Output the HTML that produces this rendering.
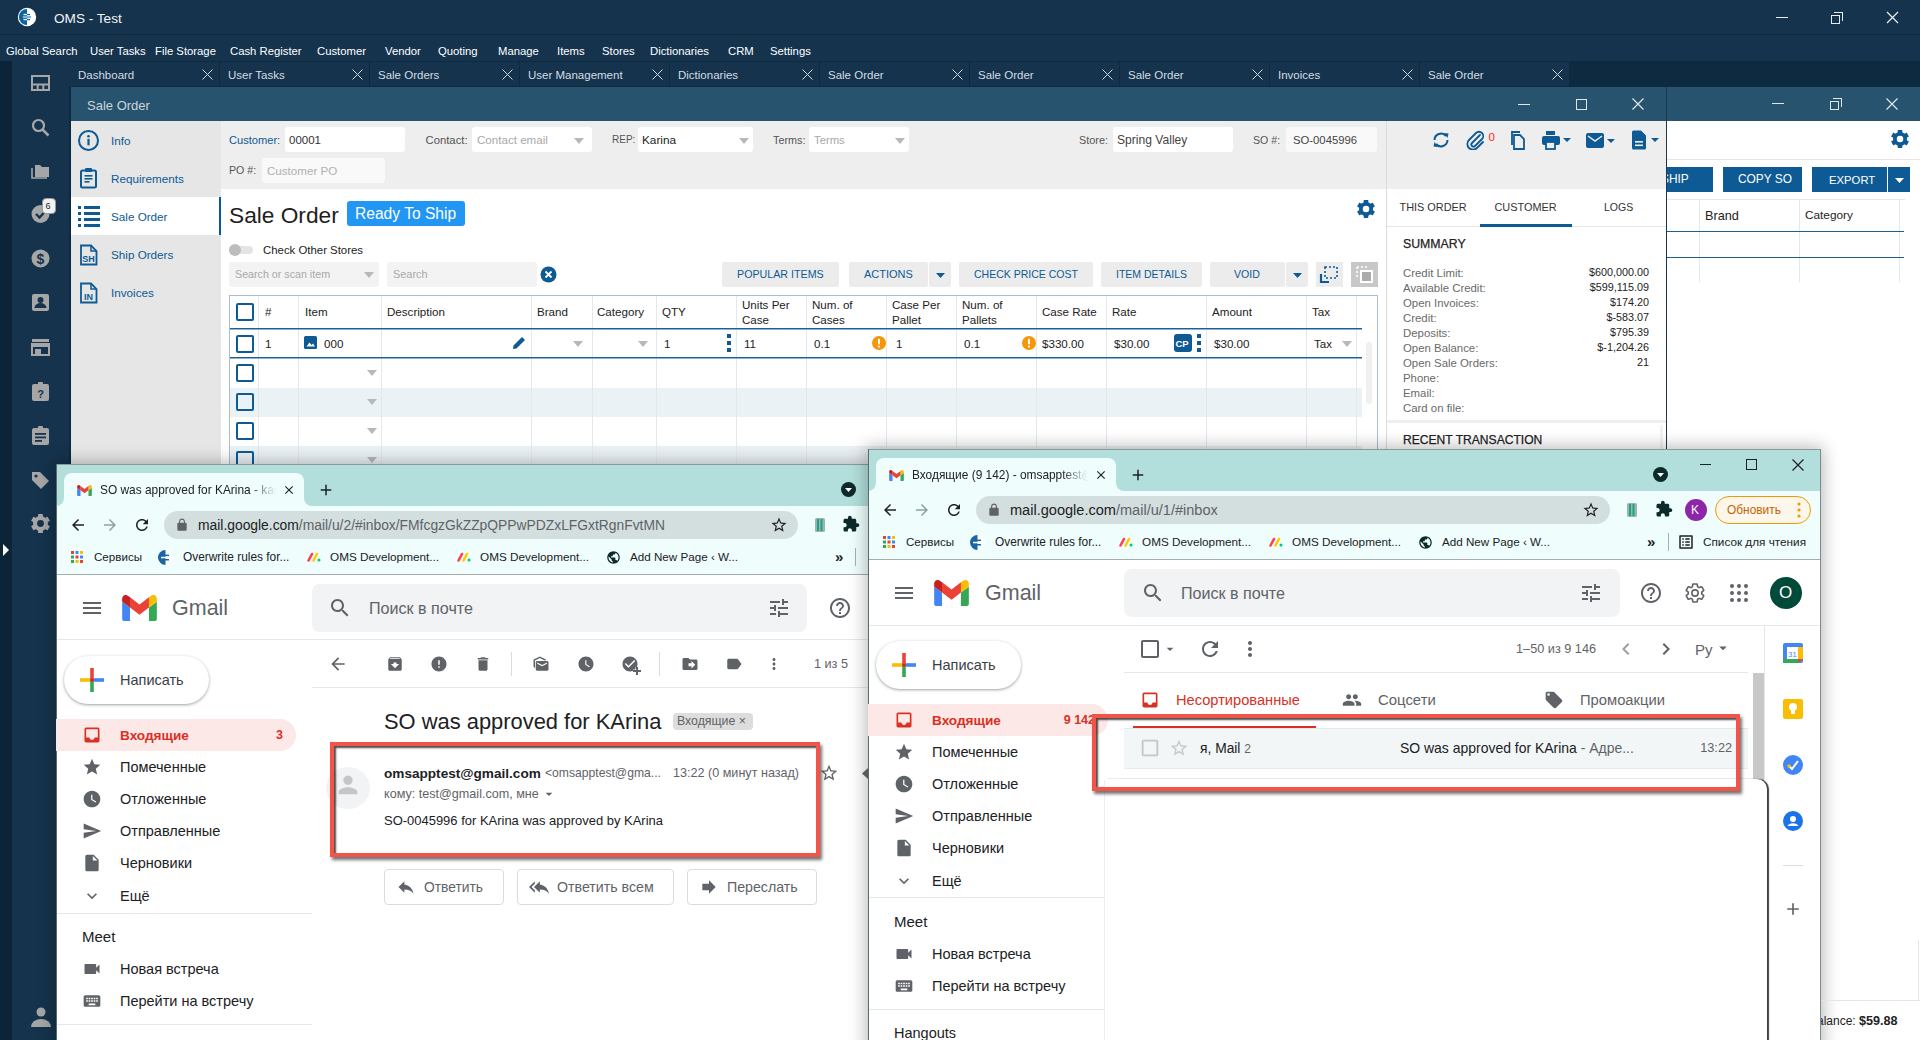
<!DOCTYPE html><html><head><meta charset="utf-8"><style>
*{margin:0;padding:0;box-sizing:border-box}
html,body{width:1920px;height:1040px;overflow:hidden;background:#fff;font-family:"Liberation Sans",sans-serif}
body>div,body>svg{position:absolute}
.t{white-space:nowrap}
</style></head><body>
<div style="left:0px;top:0px;width:1920px;height:34px;background:#15334d;"></div>
<div style="left:0px;top:34px;width:1920px;height:1px;background:#0f2a40;"></div>
<div style="left:0px;top:35px;width:1920px;height:26px;background:#15334d;"></div>
<svg style="left:17px;top:7px;" width="20" height="20" viewBox="0 0 20 20"><circle cx="10" cy="10" r="9.2" fill="#fff"/><path d="M10 1.9 A8.1 8.1 0 0 0 10 18.1 Z" fill="#0a64a4"/><rect x="6.5" y="6.9" width="3.5" height="1.3" fill="#fff"/><rect x="10" y="6.9" width="3" height="1.3" fill="#0a64a4"/><rect x="6" y="9.4" width="4" height="1.3" fill="#cfe0ec"/><rect x="10" y="9.4" width="4" height="1.3" fill="#3d86bb"/><rect x="6.5" y="11.9" width="3.5" height="1.3" fill="#fff"/><rect x="10" y="11.9" width="3" height="1.3" fill="#0a64a4"/></svg>
<div class="t" style="left:54px;top:9.0px;font-size:13.6px;line-height:19px;color:#f2f5f7;font-weight:400;">OMS - Test</div>
<div style="left:1776px;top:17px;width:12px;height:1px;background:#e8ecef;"></div>
<div style="left:1831px;top:15px;width:9px;height:9px;border:1px solid #e8ecef"></div>
<div style="left:1834px;top:12px;width:9px;height:9px;border-top:1px solid #e8ecef;border-right:1px solid #e8ecef"></div>
<svg style="left:1886px;top:11px;" width="13" height="13" viewBox="0 0 13 13"><path d="M1 1L12 12M12 1L1 12" stroke="#e8ecef" stroke-width="1.3"/></svg>
<div class="t" style="left:6px;top:42.5px;font-size:11.3px;line-height:16px;color:#ffffff;font-weight:400;">Global Search</div>
<div class="t" style="left:90px;top:42.5px;font-size:11.3px;line-height:16px;color:#ffffff;font-weight:400;">User Tasks</div>
<div class="t" style="left:155px;top:42.5px;font-size:11.3px;line-height:16px;color:#ffffff;font-weight:400;">File Storage</div>
<div class="t" style="left:230px;top:42.5px;font-size:11.3px;line-height:16px;color:#ffffff;font-weight:400;">Cash Register</div>
<div class="t" style="left:317px;top:42.5px;font-size:11.3px;line-height:16px;color:#ffffff;font-weight:400;">Customer</div>
<div class="t" style="left:385px;top:42.5px;font-size:11.3px;line-height:16px;color:#ffffff;font-weight:400;">Vendor</div>
<div class="t" style="left:438px;top:42.5px;font-size:11.3px;line-height:16px;color:#ffffff;font-weight:400;">Quoting</div>
<div class="t" style="left:498px;top:42.5px;font-size:11.3px;line-height:16px;color:#ffffff;font-weight:400;">Manage</div>
<div class="t" style="left:557px;top:42.5px;font-size:11.3px;line-height:16px;color:#ffffff;font-weight:400;">Items</div>
<div class="t" style="left:602px;top:42.5px;font-size:11.3px;line-height:16px;color:#ffffff;font-weight:400;">Stores</div>
<div class="t" style="left:650px;top:42.5px;font-size:11.3px;line-height:16px;color:#ffffff;font-weight:400;">Dictionaries</div>
<div class="t" style="left:728px;top:42.5px;font-size:11.3px;line-height:16px;color:#ffffff;font-weight:400;">CRM</div>
<div class="t" style="left:770px;top:42.5px;font-size:11.3px;line-height:16px;color:#ffffff;font-weight:400;">Settings</div>
<div style="left:0px;top:61px;width:12px;height:979px;background:#0c2437;"></div>
<div style="left:12px;top:61px;width:58px;height:979px;background:#15334d;"></div>
<div style="left:70px;top:61px;width:1850px;height:26px;background:#0e2a40;"></div>
<div style="left:70px;top:62px;width:149px;height:24px;background:#15334d;"></div>
<div class="t" style="left:78px;top:67.3px;font-size:11.5px;line-height:16px;color:#d3dce3;font-weight:400;">Dashboard</div>
<svg style="left:202px;top:69px;" width="11" height="11" viewBox="0 0 11 11"><path d="M0.5 0.5L10.5 10.5M10.5 0.5L0.5 10.5" stroke="#cfd8df" stroke-width="1"/></svg>
<div style="left:220px;top:62px;width:149px;height:24px;background:#15334d;"></div>
<div class="t" style="left:228px;top:67.3px;font-size:11.5px;line-height:16px;color:#d3dce3;font-weight:400;">User Tasks</div>
<svg style="left:352px;top:69px;" width="11" height="11" viewBox="0 0 11 11"><path d="M0.5 0.5L10.5 10.5M10.5 0.5L0.5 10.5" stroke="#cfd8df" stroke-width="1"/></svg>
<div style="left:370px;top:62px;width:149px;height:24px;background:#15334d;"></div>
<div class="t" style="left:378px;top:67.3px;font-size:11.5px;line-height:16px;color:#d3dce3;font-weight:400;">Sale Orders</div>
<svg style="left:502px;top:69px;" width="11" height="11" viewBox="0 0 11 11"><path d="M0.5 0.5L10.5 10.5M10.5 0.5L0.5 10.5" stroke="#cfd8df" stroke-width="1"/></svg>
<div style="left:520px;top:62px;width:149px;height:24px;background:#15334d;"></div>
<div class="t" style="left:528px;top:67.3px;font-size:11.5px;line-height:16px;color:#d3dce3;font-weight:400;">User Management</div>
<svg style="left:652px;top:69px;" width="11" height="11" viewBox="0 0 11 11"><path d="M0.5 0.5L10.5 10.5M10.5 0.5L0.5 10.5" stroke="#cfd8df" stroke-width="1"/></svg>
<div style="left:670px;top:62px;width:149px;height:24px;background:#15334d;"></div>
<div class="t" style="left:678px;top:67.3px;font-size:11.5px;line-height:16px;color:#d3dce3;font-weight:400;">Dictionaries</div>
<svg style="left:802px;top:69px;" width="11" height="11" viewBox="0 0 11 11"><path d="M0.5 0.5L10.5 10.5M10.5 0.5L0.5 10.5" stroke="#cfd8df" stroke-width="1"/></svg>
<div style="left:820px;top:62px;width:149px;height:24px;background:#15334d;"></div>
<div class="t" style="left:828px;top:67.3px;font-size:11.5px;line-height:16px;color:#d3dce3;font-weight:400;">Sale Order</div>
<svg style="left:952px;top:69px;" width="11" height="11" viewBox="0 0 11 11"><path d="M0.5 0.5L10.5 10.5M10.5 0.5L0.5 10.5" stroke="#cfd8df" stroke-width="1"/></svg>
<div style="left:970px;top:62px;width:149px;height:24px;background:#15334d;"></div>
<div class="t" style="left:978px;top:67.3px;font-size:11.5px;line-height:16px;color:#d3dce3;font-weight:400;">Sale Order</div>
<svg style="left:1102px;top:69px;" width="11" height="11" viewBox="0 0 11 11"><path d="M0.5 0.5L10.5 10.5M10.5 0.5L0.5 10.5" stroke="#cfd8df" stroke-width="1"/></svg>
<div style="left:1120px;top:62px;width:149px;height:24px;background:#15334d;"></div>
<div class="t" style="left:1128px;top:67.3px;font-size:11.5px;line-height:16px;color:#d3dce3;font-weight:400;">Sale Order</div>
<svg style="left:1252px;top:69px;" width="11" height="11" viewBox="0 0 11 11"><path d="M0.5 0.5L10.5 10.5M10.5 0.5L0.5 10.5" stroke="#cfd8df" stroke-width="1"/></svg>
<div style="left:1270px;top:62px;width:149px;height:24px;background:#15334d;"></div>
<div class="t" style="left:1278px;top:67.3px;font-size:11.5px;line-height:16px;color:#d3dce3;font-weight:400;">Invoices</div>
<svg style="left:1402px;top:69px;" width="11" height="11" viewBox="0 0 11 11"><path d="M0.5 0.5L10.5 10.5M10.5 0.5L0.5 10.5" stroke="#cfd8df" stroke-width="1"/></svg>
<div style="left:1420px;top:62px;width:149px;height:24px;background:#15334d;"></div>
<div class="t" style="left:1428px;top:67.3px;font-size:11.5px;line-height:16px;color:#d3dce3;font-weight:400;">Sale Order</div>
<svg style="left:1552px;top:69px;" width="11" height="11" viewBox="0 0 11 11"><path d="M0.5 0.5L10.5 10.5M10.5 0.5L0.5 10.5" stroke="#cfd8df" stroke-width="1"/></svg>
<div style="left:1666px;top:87px;width:254px;height:34px;background:#27536e;"></div>
<div style="left:1772px;top:103px;width:12px;height:1px;background:#dfe7ec;"></div>
<div style="left:1830px;top:101px;width:9px;height:9px;border:1px solid #dfe7ec"></div>
<div style="left:1833px;top:98px;width:9px;height:9px;border-top:1px solid #dfe7ec;border-right:1px solid #dfe7ec"></div>
<svg style="left:1886px;top:98px;" width="12" height="12" viewBox="0 0 12 12"><path d="M0.5 0.5L11.5 11.5M11.5 0.5L0.5 11.5" stroke="#dfe7ec" stroke-width="1.2"/></svg>
<div style="left:1666px;top:121px;width:254px;height:919px;background:#ffffff;"></div>
<div style="left:71px;top:87px;width:1595px;height:34px;background:#27536e;"></div>
<div class="t" style="left:87px;top:96.5px;font-size:13px;line-height:18px;color:#c9d5dd;font-weight:400;">Sale Order</div>
<div style="left:1518px;top:104px;width:12px;height:1px;background:#dfe7ec;"></div>
<div style="left:1576px;top:99px;width:11px;height:11px;border:1.2px solid #dfe7ec"></div>
<svg style="left:1632px;top:98px;" width="12" height="12" viewBox="0 0 12 12"><path d="M0.5 0.5L11.5 11.5M11.5 0.5L0.5 11.5" stroke="#dfe7ec" stroke-width="1.2"/></svg>
<div style="left:71px;top:121px;width:1595px;height:344px;background:#ffffff;"></div>
<div style="left:69px;top:87px;width:2px;height:378px;background:#0e2a40;"></div>
<div style="left:71px;top:121px;width:150px;height:344px;background:#e6e6e6;"></div>
<div style="left:71px;top:197px;width:150px;height:38px;background:#ffffff;"></div>
<div style="left:219px;top:197px;width:2px;height:38px;background:#0d5a94;"></div>
<svg style="left:77px;top:129px;" width="23" height="23" viewBox="0 0 23 23"><circle cx="11.5" cy="11.5" r="9.5" fill="none" stroke="#0d5a94" stroke-width="2"/><circle cx="11.5" cy="7.3" r="1.3" fill="#0d5a94"/><rect x="10.4" y="9.8" width="2.2" height="6.5" fill="#0d5a94"/></svg>
<svg style="left:79px;top:167px;" width="20" height="22" viewBox="0 0 20 22"><rect x="2" y="3.5" width="15" height="17" rx="1.5" fill="none" stroke="#0d5a94" stroke-width="2"/><rect x="6" y="1" width="7" height="4" rx="1" fill="#0d5a94"/><rect x="5.5" y="8" width="8" height="1.6" fill="#0d5a94"/><rect x="5.5" y="11" width="8" height="1.6" fill="#0d5a94"/><rect x="5.5" y="14" width="5" height="1.6" fill="#0d5a94"/></svg>
<svg style="left:78px;top:206px;" width="22" height="21" viewBox="0 0 22 21"><rect x="0" y="0" width="3" height="3" fill="#0d5a94"/><rect x="6" y="0" width="16" height="3" fill="#0d5a94"/><rect x="0" y="6" width="3" height="3" fill="#0d5a94"/><rect x="6" y="6" width="16" height="3" fill="#0d5a94"/><rect x="0" y="12" width="3" height="3" fill="#0d5a94"/><rect x="6" y="12" width="16" height="3" fill="#0d5a94"/><rect x="0" y="18" width="3" height="3" fill="#0d5a94"/><rect x="6" y="18" width="16" height="3" fill="#0d5a94"/></svg>
<svg style="left:79px;top:244px;" width="20" height="22" viewBox="0 0 20 22"><path d="M2 1.5 H12 L17.5 7 V20.5 H2 Z" fill="none" stroke="#0d5a94" stroke-width="1.8"/><path d="M12 1.5 V7 H17.5" fill="none" stroke="#0d5a94" stroke-width="1.5"/><text x="9.5" y="18" font-size="9" font-weight="700" fill="#0d5a94" text-anchor="middle" font-family="Liberation Sans">SH</text></svg>
<svg style="left:79px;top:282px;" width="20" height="22" viewBox="0 0 20 22"><path d="M2 1.5 H12 L17.5 7 V20.5 H2 Z" fill="none" stroke="#0d5a94" stroke-width="1.8"/><path d="M12 1.5 V7 H17.5" fill="none" stroke="#0d5a94" stroke-width="1.5"/><text x="9.5" y="18" font-size="9" font-weight="700" fill="#0d5a94" text-anchor="middle" font-family="Liberation Sans">IN</text></svg>
<div class="t" style="left:111px;top:132.5px;font-size:11.7px;line-height:16px;color:#0d5a94;font-weight:400;">Info</div>
<div class="t" style="left:111px;top:170.5px;font-size:11.7px;line-height:16px;color:#0d5a94;font-weight:400;">Requirements</div>
<div class="t" style="left:111px;top:208.5px;font-size:11.7px;line-height:16px;color:#0d5a94;font-weight:400;">Sale Order</div>
<div class="t" style="left:111px;top:246.5px;font-size:11.7px;line-height:16px;color:#0d5a94;font-weight:400;">Ship Orders</div>
<div class="t" style="left:111px;top:284.5px;font-size:11.7px;line-height:16px;color:#0d5a94;font-weight:400;">Invoices</div>
<div style="left:221px;top:121px;width:1165px;height:68px;background:#eeeeee;"></div>
<div style="left:1386px;top:121px;width:280px;height:68px;background:#eeeeee;"></div>
<div style="left:1386px;top:121px;width:1px;height:344px;background:#dcdcdc;"></div>
<div class="t" style="left:229px;top:132.0px;font-size:11.1px;line-height:16px;color:#0d5a94;font-weight:400;">Customer:</div>
<div style="left:285px;top:127px;width:120px;height:25px;background:#ffffff;border-radius:3px"></div>
<div class="t" style="left:289px;top:132.0px;font-size:11.5px;line-height:16px;color:#333333;font-weight:400;">00001</div>
<div class="t" style="left:425.5px;top:132.0px;font-size:11.3px;line-height:16px;color:#555555;font-weight:400;">Contact:</div>
<div style="left:472px;top:127px;width:120px;height:25px;background:#ffffff;border-radius:3px"></div>
<div class="t" style="left:477px;top:132.0px;font-size:11.6px;line-height:16px;color:#a8a8a8;font-weight:400;">Contact email</div>
<svg style="left:574.0px;top:137.5px;" width="10" height="6" viewBox="0 0 10 6"><path d="M0 0H10L5.0 6Z" fill="#b8b8b8"/></svg>
<div class="t" style="left:612px;top:133.0px;font-size:10px;line-height:14px;color:#555555;font-weight:400;">REP:</div>
<div style="left:638px;top:127px;width:115px;height:25px;background:#ffffff;border-radius:3px"></div>
<div class="t" style="left:642px;top:131.5px;font-size:11.8px;line-height:17px;color:#222222;font-weight:400;">Karina</div>
<svg style="left:739.0px;top:137.5px;" width="10" height="6" viewBox="0 0 10 6"><path d="M0 0H10L5.0 6Z" fill="#b8b8b8"/></svg>
<div class="t" style="left:773px;top:132.5px;font-size:10.8px;line-height:15px;color:#555555;font-weight:400;">Terms:</div>
<div style="left:809px;top:127px;width:100px;height:25px;background:#ffffff;border-radius:3px"></div>
<div class="t" style="left:814px;top:132.0px;font-size:11.3px;line-height:16px;color:#a8a8a8;font-weight:400;">Terms</div>
<svg style="left:895.0px;top:137.5px;" width="10" height="6" viewBox="0 0 10 6"><path d="M0 0H10L5.0 6Z" fill="#b8b8b8"/></svg>
<div class="t" style="left:1079px;top:132.5px;font-size:10.9px;line-height:15px;color:#555555;font-weight:400;">Store:</div>
<div style="left:1113px;top:127px;width:120px;height:25px;background:#ffffff;border-radius:3px"></div>
<div class="t" style="left:1117px;top:131.5px;font-size:12.1px;line-height:17px;color:#444444;font-weight:400;">Spring Valley</div>
<div class="t" style="left:1253px;top:132.5px;font-size:10.6px;line-height:15px;color:#555555;font-weight:400;">SO #:</div>
<div style="left:1286px;top:127px;width:91px;height:25px;background:#f9f9f9;border-radius:3px"></div>
<div class="t" style="left:1293px;top:132.0px;font-size:11.3px;line-height:16px;color:#444444;font-weight:400;">SO-0045996</div>
<div class="t" style="left:229px;top:163.0px;font-size:10.6px;line-height:15px;color:#555555;font-weight:400;">PO #:</div>
<div style="left:262px;top:158px;width:123px;height:25px;background:#f9f9f9;border-radius:3px"></div>
<div class="t" style="left:267px;top:162.5px;font-size:11.6px;line-height:16px;color:#b0b0b0;font-weight:400;">Customer PO</div>
<svg style="left:1431px;top:132px;" width="20" height="16" viewBox="0 0 20 16"><path d="M3.5 8 A6.5 6.5 0 0 1 15 4" fill="none" stroke="#0d5a94" stroke-width="2"/><path d="M16.5 8 A6.5 6.5 0 0 1 5 12" fill="none" stroke="#0d5a94" stroke-width="2"/><path d="M13 1 L17.5 1.5 L16.5 6Z" fill="#0d5a94"/><path d="M7 15 L2.5 14.5 L3.5 10Z" fill="#0d5a94"/></svg>
<svg style="left:1466px;top:130px;" width="19" height="20" viewBox="0 0 19 20"><path d="M14 5 L6 13 A2 2 0 0 0 9 16 L16 9 A4 4 0 0 0 10 3 L3 10 A5.5 5.5 0 0 0 11 18 L17 12" fill="none" stroke="#0d5a94" stroke-width="1.8" stroke-linecap="round"/></svg>
<div class="t" style="left:1488.5px;top:128.5px;font-size:11.5px;line-height:16px;color:#ff2020;font-weight:400;">0</div>
<svg style="left:1508px;top:130px;" width="18" height="20" viewBox="0 0 18 20"><path d="M4 15 V2 H12" fill="none" stroke="#0d5a94" stroke-width="1.8"/><path d="M6 5 H12 L16 9 V19 H6 Z" fill="none" stroke="#0d5a94" stroke-width="1.8"/></svg>
<svg style="left:1541px;top:131px;" width="32" height="19" viewBox="0 0 32 19"><rect x="5" y="0" width="9" height="4" fill="#0d5a94"/><rect x="1" y="5" width="18" height="9" rx="2" fill="#0d5a94"/><rect x="5" y="11" width="9" height="7" fill="#eeeeee" stroke="#0d5a94" stroke-width="1.8"/><path d="M22 7H30L26 11Z" fill="#0d5a94"/></svg>
<svg style="left:1585px;top:132px;" width="32" height="17" viewBox="0 0 32 17"><rect x="1" y="1" width="18" height="15" rx="2" fill="#0d5a94"/><path d="M3 4 L10 9 L17 4" fill="none" stroke="#eeeeee" stroke-width="1.5"/><path d="M22 7H30L26 11Z" fill="#0d5a94"/></svg>
<svg style="left:1631px;top:130px;" width="30" height="20" viewBox="0 0 30 20"><path d="M1 2 A1.5 1.5 0 0 1 2.5 0.5 H10 L15 5.5 V18 A1.5 1.5 0 0 1 13.5 19.5 H2.5 A1.5 1.5 0 0 1 1 18Z" fill="#0d5a94"/><rect x="4" y="11" width="8" height="1.6" fill="#eeeeee"/><rect x="4" y="14.5" width="8" height="1.6" fill="#eeeeee"/><path d="M20 8H28L24 12Z" fill="#0d5a94"/></svg>
<div class="t" style="left:229px;top:198.5px;font-size:22.7px;line-height:32px;color:#1e1e1e;font-weight:400;">Sale Order</div>
<div style="left:347px;top:201px;width:118px;height:25px;background:#2196f3;border-radius:3px"></div>
<div class="t" style="left:355px;top:202.5px;font-size:15.6px;line-height:22px;color:#ffffff;font-weight:400;">Ready To Ship</div>
<svg style="left:1355px;top:198px;" width="22" height="22" viewBox="0 0 22 22"><rect x="8.7" y="2" width="4.6" height="4.0" rx="0.4" transform="rotate(0 11 11)" fill="#0d5a94"/><rect x="8.7" y="2" width="4.6" height="4.0" rx="0.4" transform="rotate(60 11 11)" fill="#0d5a94"/><rect x="8.7" y="2" width="4.6" height="4.0" rx="0.4" transform="rotate(120 11 11)" fill="#0d5a94"/><rect x="8.7" y="2" width="4.6" height="4.0" rx="0.4" transform="rotate(180 11 11)" fill="#0d5a94"/><rect x="8.7" y="2" width="4.6" height="4.0" rx="0.4" transform="rotate(240 11 11)" fill="#0d5a94"/><rect x="8.7" y="2" width="4.6" height="4.0" rx="0.4" transform="rotate(300 11 11)" fill="#0d5a94"/><circle cx="11" cy="11" r="7.0200000000000005" fill="#0d5a94"/><circle cx="11" cy="11" r="3.2399999999999998" fill="#fff"/></svg>
<div style="left:229px;top:245.5px;width:24px;height:8.0px;background:#e4e4e4;border-radius:4px"></div>
<div style="left:229px;top:243.5px;width:12px;height:12.0px;background:#bdbdbd;border-radius:50%"></div>
<div class="t" style="left:263px;top:242.0px;font-size:11.4px;line-height:16px;color:#222222;font-weight:400;">Check Other Stores</div>
<div style="left:229px;top:262px;width:150px;height:25px;background:#f3f3f3;border-radius:3px"></div>
<div class="t" style="left:235px;top:267.0px;font-size:10.7px;line-height:15px;color:#a9a9a9;font-weight:400;">Search or scan item</div>
<svg style="left:364.0px;top:272.0px;" width="10" height="6" viewBox="0 0 10 6"><path d="M0 0H10L5.0 6Z" fill="#b8b8b8"/></svg>
<div style="left:387px;top:262px;width:150px;height:25px;background:#f3f3f3;border-radius:3px"></div>
<div class="t" style="left:393px;top:267.0px;font-size:10.9px;line-height:15px;color:#a9a9a9;font-weight:400;">Search</div>
<svg style="left:540px;top:266px;" width="17" height="17" viewBox="0 0 17 17"><circle cx="8.5" cy="8.5" r="8" fill="#0d5a94"/><path d="M5.5 5.5L11.5 11.5M11.5 5.5L5.5 11.5" stroke="#fff" stroke-width="1.8"/></svg>
<div style="left:722px;top:262px;width:117px;height:25px;background:#ececec;border-radius:2px"></div>
<div class="t" style="left:737px;top:267.2px;font-size:10.7px;line-height:15px;color:#0d5a94;font-weight:400;">POPULAR ITEMS</div>
<div style="left:849px;top:262px;width:79px;height:25px;background:#ececec;border-radius:2px"></div>
<div class="t" style="left:864px;top:267.2px;font-size:11px;line-height:15px;color:#0d5a94;font-weight:400;">ACTIONS</div>
<div style="left:929px;top:262px;width:22px;height:25px;background:#ececec;border-radius:2px"></div>
<svg style="left:935.5px;top:272.5px;" width="9" height="5" viewBox="0 0 9 5"><path d="M0 0H9L4.5 5Z" fill="#0d5a94"/></svg>
<div style="left:959px;top:262px;width:134px;height:25px;background:#ececec;border-radius:2px"></div>
<div class="t" style="left:974px;top:267.2px;font-size:10.5px;line-height:15px;color:#0d5a94;font-weight:400;">CHECK PRICE COST</div>
<div style="left:1101px;top:262px;width:101px;height:25px;background:#ececec;border-radius:2px"></div>
<div class="t" style="left:1116px;top:267.2px;font-size:10.5px;line-height:15px;color:#0d5a94;font-weight:400;">ITEM DETAILS</div>
<div style="left:1210px;top:262px;width:75px;height:25px;background:#ececec;border-radius:2px"></div>
<div class="t" style="left:1234px;top:267.2px;font-size:10.6px;line-height:15px;color:#0d5a94;font-weight:400;">VOID</div>
<div style="left:1286px;top:262px;width:22px;height:25px;background:#ececec;border-radius:2px"></div>
<svg style="left:1292.5px;top:272.5px;" width="9" height="5" viewBox="0 0 9 5"><path d="M0 0H9L4.5 5Z" fill="#0d5a94"/></svg>
<div style="left:1316px;top:262px;width:27px;height:25px;background:#ececec"></div>
<svg style="left:1319px;top:265px;" width="21" height="19" viewBox="0 0 21 19"><path d="M2 9 V17 H10" fill="none" stroke="#0d5a94" stroke-width="2.2"/><path d="M6 2 H18 V13 H6 Z" fill="none" stroke="#0d5a94" stroke-width="1.6" stroke-dasharray="2 2"/></svg>
<div style="left:1351px;top:262px;width:27px;height:25px;background:#c8c8c8"></div>
<svg style="left:1354px;top:265px;" width="21" height="19" viewBox="0 0 21 19"><rect x="7" y="6" width="11" height="11" fill="#ababab" stroke="#fff" stroke-width="2"/><path d="M3 2 V14 M3 2 H15" stroke="#fff" stroke-width="1.6" stroke-dasharray="2 2"/></svg>
<div style="left:229px;top:295px;width:1149px;height:1px;background:#a9bfd0;"></div>
<div style="left:229px;top:295px;width:1px;height:170px;background:#a9bfd0;"></div>
<div style="left:1377px;top:295px;width:1px;height:170px;background:#a9bfd0;"></div>
<div style="left:230px;top:388px;width:1132px;height:29px;background:#ebf2f6;"></div>
<div style="left:230px;top:446px;width:1132px;height:19px;background:#ebf2f6;"></div>
<div style="left:258px;top:296px;width:1px;height:169px;background:#e3e8ec;"></div>
<div style="left:298px;top:296px;width:1px;height:169px;background:#e3e8ec;"></div>
<div style="left:381px;top:296px;width:1px;height:169px;background:#e3e8ec;"></div>
<div style="left:531px;top:296px;width:1px;height:169px;background:#e3e8ec;"></div>
<div style="left:592px;top:296px;width:1px;height:169px;background:#e3e8ec;"></div>
<div style="left:656px;top:296px;width:1px;height:169px;background:#e3e8ec;"></div>
<div style="left:736px;top:296px;width:1px;height:169px;background:#e3e8ec;"></div>
<div style="left:806px;top:296px;width:1px;height:169px;background:#e3e8ec;"></div>
<div style="left:886px;top:296px;width:1px;height:169px;background:#e3e8ec;"></div>
<div style="left:956px;top:296px;width:1px;height:169px;background:#e3e8ec;"></div>
<div style="left:1036px;top:296px;width:1px;height:169px;background:#e3e8ec;"></div>
<div style="left:1106px;top:296px;width:1px;height:169px;background:#e3e8ec;"></div>
<div style="left:1206px;top:296px;width:1px;height:169px;background:#e3e8ec;"></div>
<div style="left:1306px;top:296px;width:1px;height:169px;background:#e3e8ec;"></div>
<div style="left:1356px;top:296px;width:1px;height:169px;background:#e3e8ec;"></div>
<div style="left:230px;top:328px;width:1132px;height:1px;background:#1a5f96;"></div>
<div style="left:230px;top:329px;width:1132px;height:1px;background:#8fb2cc;"></div>
<div style="left:230px;top:357px;width:1132px;height:1px;background:#1a5f96;"></div>
<div style="left:230px;top:358px;width:1132px;height:1px;background:#8fb2cc;"></div>
<div style="left:236px;top:303px;width:18px;height:18px;border:2.2px solid #0d5a94;border-radius:2px"></div>
<div style="left:236px;top:334.5px;width:18px;height:18.0px;border:2.2px solid #0d5a94;border-radius:2px"></div>
<div style="left:236px;top:364px;width:18px;height:18px;border:2.2px solid #0d5a94;border-radius:2px"></div>
<div style="left:236px;top:393px;width:18px;height:18px;border:2.2px solid #0d5a94;border-radius:2px"></div>
<div style="left:236px;top:422px;width:18px;height:18px;border:2.2px solid #0d5a94;border-radius:2px"></div>
<div style="left:236px;top:451px;width:18px;height:18px;border:2.2px solid #0d5a94;border-radius:2px"></div>
<div class="t" style="left:265px;top:304.0px;font-size:11.6px;line-height:16px;color:#222222;font-weight:400;">#</div>
<div class="t" style="left:305px;top:304.0px;font-size:11.6px;line-height:16px;color:#222222;font-weight:400;">Item</div>
<div class="t" style="left:387px;top:304.0px;font-size:11.6px;line-height:16px;color:#222222;font-weight:400;">Description</div>
<div class="t" style="left:537px;top:304.0px;font-size:11.6px;line-height:16px;color:#222222;font-weight:400;">Brand</div>
<div class="t" style="left:597px;top:304.0px;font-size:11.6px;line-height:16px;color:#222222;font-weight:400;">Category</div>
<div class="t" style="left:662px;top:304.0px;font-size:11.6px;line-height:16px;color:#222222;font-weight:400;">QTY</div>
<div class="t" style="left:1042px;top:304.0px;font-size:11.6px;line-height:16px;color:#222222;font-weight:400;">Case Rate</div>
<div class="t" style="left:1112px;top:304.0px;font-size:11.6px;line-height:16px;color:#222222;font-weight:400;">Rate</div>
<div class="t" style="left:1212px;top:304.0px;font-size:11.6px;line-height:16px;color:#222222;font-weight:400;">Amount</div>
<div class="t" style="left:1312px;top:304.0px;font-size:11.6px;line-height:16px;color:#222222;font-weight:400;">Tax</div>
<div class="t" style="left:742px;top:297.0px;font-size:11.6px;line-height:16px;color:#222222;font-weight:400;">Units Per</div>
<div class="t" style="left:742px;top:312.0px;font-size:11.6px;line-height:16px;color:#222222;font-weight:400;">Case</div>
<div class="t" style="left:812px;top:297.0px;font-size:11.6px;line-height:16px;color:#222222;font-weight:400;">Num. of</div>
<div class="t" style="left:812px;top:312.0px;font-size:11.6px;line-height:16px;color:#222222;font-weight:400;">Cases</div>
<div class="t" style="left:892px;top:297.0px;font-size:11.6px;line-height:16px;color:#222222;font-weight:400;">Case Per</div>
<div class="t" style="left:892px;top:312.0px;font-size:11.6px;line-height:16px;color:#222222;font-weight:400;">Pallet</div>
<div class="t" style="left:962px;top:297.0px;font-size:11.6px;line-height:16px;color:#222222;font-weight:400;">Num. of</div>
<div class="t" style="left:962px;top:312.0px;font-size:11.6px;line-height:16px;color:#222222;font-weight:400;">Pallets</div>
<div class="t" style="left:265px;top:335.7px;font-size:11.6px;line-height:16px;color:#222222;font-weight:400;">1</div>
<svg style="left:304px;top:336px;" width="14" height="14" viewBox="0 0 14 14"><rect x="0" y="0" width="13" height="13" rx="1.5" fill="#0d5a94"/><path d="M2.5 10.5 L5.5 6.5 L7.5 9 L9 7.5 L11 10.5Z" fill="#fff"/></svg>
<div class="t" style="left:324px;top:335.7px;font-size:11.6px;line-height:16px;color:#222222;font-weight:400;">000</div>
<svg style="left:511px;top:335px;" width="16" height="16" viewBox="0 0 16 16"><path d="M2 14 L2.5 10.5 L11 2 L14 5 L5.5 13.5Z" fill="#0d5a94"/></svg>
<svg style="left:573.0px;top:341.0px;" width="10" height="6" viewBox="0 0 10 6"><path d="M0 0H10L5.0 6Z" fill="#b8b8b8"/></svg>
<svg style="left:638.0px;top:341.0px;" width="10" height="6" viewBox="0 0 10 6"><path d="M0 0H10L5.0 6Z" fill="#b8b8b8"/></svg>
<div class="t" style="left:664px;top:335.7px;font-size:11.6px;line-height:16px;color:#222222;font-weight:400;">1</div>
<svg style="left:727px;top:334px;" width="5" height="18" viewBox="0 0 5 18"><rect x="0" y="0" width="4" height="4" fill="#0d5a94"/><rect x="0" y="7" width="4" height="4" fill="#0d5a94"/><rect x="0" y="14" width="4" height="4" fill="#0d5a94"/></svg>
<div class="t" style="left:744px;top:335.7px;font-size:11.6px;line-height:16px;color:#222222;font-weight:400;">11</div>
<div class="t" style="left:814px;top:335.7px;font-size:11.6px;line-height:16px;color:#222222;font-weight:400;">0.1</div>
<svg style="left:871.5px;top:336px;" width="14" height="14" viewBox="0 0 14 14"><circle cx="7" cy="7" r="7" fill="#f5970a"/><rect x="6" y="2.8" width="2" height="5.6" rx="0.8" fill="#fff"/><circle cx="7" cy="10.6" r="1.1" fill="#fff"/></svg>
<svg style="left:1021.5px;top:336px;" width="14" height="14" viewBox="0 0 14 14"><circle cx="7" cy="7" r="7" fill="#f5970a"/><rect x="6" y="2.8" width="2" height="5.6" rx="0.8" fill="#fff"/><circle cx="7" cy="10.6" r="1.1" fill="#fff"/></svg>
<div class="t" style="left:896px;top:335.7px;font-size:11.6px;line-height:16px;color:#222222;font-weight:400;">1</div>
<div class="t" style="left:964px;top:335.7px;font-size:11.6px;line-height:16px;color:#222222;font-weight:400;">0.1</div>
<div class="t" style="left:1042px;top:335.7px;font-size:11.6px;line-height:16px;color:#222222;font-weight:400;">$330.00</div>
<div class="t" style="left:1114px;top:335.7px;font-size:11.6px;line-height:16px;color:#222222;font-weight:400;">$30.00</div>
<div style="left:1174px;top:334px;width:18px;height:18px;background:#0d5a94;border-radius:3px"></div>
<div class="t" style="left:1175.5px;top:336.5px;font-size:9.5px;line-height:13px;color:#ffffff;font-weight:700;">CP</div>
<svg style="left:1197px;top:334px;" width="5" height="18" viewBox="0 0 5 18"><rect x="0" y="0" width="4" height="4" fill="#0d5a94"/><rect x="0" y="7" width="4" height="4" fill="#0d5a94"/><rect x="0" y="14" width="4" height="4" fill="#0d5a94"/></svg>
<div class="t" style="left:1214px;top:335.7px;font-size:11.6px;line-height:16px;color:#222222;font-weight:400;">$30.00</div>
<div class="t" style="left:1314px;top:335.7px;font-size:11.6px;line-height:16px;color:#222222;font-weight:400;">Tax</div>
<svg style="left:1342.0px;top:341.0px;" width="10" height="6" viewBox="0 0 10 6"><path d="M0 0H10L5.0 6Z" fill="#b8b8b8"/></svg>
<svg style="left:367.0px;top:370.0px;" width="10" height="6" viewBox="0 0 10 6"><path d="M0 0H10L5.0 6Z" fill="#b8b8b8"/></svg>
<svg style="left:367.0px;top:399.0px;" width="10" height="6" viewBox="0 0 10 6"><path d="M0 0H10L5.0 6Z" fill="#b8b8b8"/></svg>
<svg style="left:367.0px;top:428.0px;" width="10" height="6" viewBox="0 0 10 6"><path d="M0 0H10L5.0 6Z" fill="#b8b8b8"/></svg>
<svg style="left:367.0px;top:457.0px;" width="10" height="6" viewBox="0 0 10 6"><path d="M0 0H10L5.0 6Z" fill="#b8b8b8"/></svg>
<div style="left:1366px;top:342px;width:6px;height:62px;background:#f0f0f0;border-radius:3px"></div>
<div style="left:1387px;top:189px;width:279px;height:276px;background:#ffffff;"></div>
<div class="t" style="left:1399.5px;top:200.0px;font-size:10.9px;line-height:15px;color:#333333;font-weight:400;">THIS ORDER</div>
<div class="t" style="left:1494.5px;top:200.0px;font-size:10.9px;line-height:15px;color:#333333;font-weight:400;">CUSTOMER</div>
<div class="t" style="left:1604px;top:200.0px;font-size:10.5px;line-height:15px;color:#333333;font-weight:400;">LOGS</div>
<div style="left:1387px;top:226px;width:279px;height:1px;background:#e6e6e6;"></div>
<div style="left:1480px;top:224px;width:92px;height:3px;background:#0d5a94;"></div>
<div class="t" style="left:1403px;top:236.0px;font-size:12.3px;line-height:17px;color:#222222;font-weight:400;-webkit-text-stroke:0.25px #222">SUMMARY</div>
<div class="t" style="left:1403px;top:264.8px;font-size:11.4px;line-height:16px;color:#6a6a6a;font-weight:400;">Credit Limit:</div>
<div class="t" style="right:271px;top:265.3px;font-size:10.8px;line-height:15px;color:#222222;font-weight:400;text-align:right;">$600,000.00</div>
<div class="t" style="left:1403px;top:279.8px;font-size:11.4px;line-height:16px;color:#6a6a6a;font-weight:400;">Available Credit:</div>
<div class="t" style="right:271px;top:280.3px;font-size:10.8px;line-height:15px;color:#222222;font-weight:400;text-align:right;">$599,115.09</div>
<div class="t" style="left:1403px;top:294.8px;font-size:11.4px;line-height:16px;color:#6a6a6a;font-weight:400;">Open Invoices:</div>
<div class="t" style="right:271px;top:295.3px;font-size:10.8px;line-height:15px;color:#222222;font-weight:400;text-align:right;">$174.20</div>
<div class="t" style="left:1403px;top:309.8px;font-size:11.4px;line-height:16px;color:#6a6a6a;font-weight:400;">Credit:</div>
<div class="t" style="right:271px;top:310.3px;font-size:10.8px;line-height:15px;color:#222222;font-weight:400;text-align:right;">$-583.07</div>
<div class="t" style="left:1403px;top:324.8px;font-size:11.4px;line-height:16px;color:#6a6a6a;font-weight:400;">Deposits:</div>
<div class="t" style="right:271px;top:325.3px;font-size:10.8px;line-height:15px;color:#222222;font-weight:400;text-align:right;">$795.39</div>
<div class="t" style="left:1403px;top:339.8px;font-size:11.4px;line-height:16px;color:#6a6a6a;font-weight:400;">Open Balance:</div>
<div class="t" style="right:271px;top:340.3px;font-size:10.8px;line-height:15px;color:#222222;font-weight:400;text-align:right;">$-1,204.26</div>
<div class="t" style="left:1403px;top:354.8px;font-size:11.4px;line-height:16px;color:#6a6a6a;font-weight:400;">Open Sale Orders:</div>
<div class="t" style="right:271px;top:355.3px;font-size:10.8px;line-height:15px;color:#222222;font-weight:400;text-align:right;">21</div>
<div class="t" style="left:1403px;top:369.8px;font-size:11.4px;line-height:16px;color:#6a6a6a;font-weight:400;">Phone:</div>
<div class="t" style="left:1403px;top:384.8px;font-size:11.4px;line-height:16px;color:#6a6a6a;font-weight:400;">Email:</div>
<div class="t" style="left:1403px;top:399.8px;font-size:11.4px;line-height:16px;color:#6a6a6a;font-weight:400;">Card on file:</div>
<div style="left:1387px;top:420px;width:279px;height:3px;background:#eeeeee;"></div>
<div class="t" style="left:1403px;top:431.5px;font-size:12.1px;line-height:17px;color:#222222;font-weight:400;-webkit-text-stroke:0.25px #222">RECENT TRANSACTION</div>
<div style="left:1660px;top:425px;width:3px;height:40px;background:#f3f3f3;"></div>
<div style="left:1666px;top:87px;width:1px;height:378px;background:#173a52;"></div>
<svg style="left:1889px;top:128px;" width="22" height="22" viewBox="0 0 22 22"><rect x="8.7" y="2" width="4.6" height="4.0" rx="0.4" transform="rotate(0 11 11)" fill="#0d5a94"/><rect x="8.7" y="2" width="4.6" height="4.0" rx="0.4" transform="rotate(60 11 11)" fill="#0d5a94"/><rect x="8.7" y="2" width="4.6" height="4.0" rx="0.4" transform="rotate(120 11 11)" fill="#0d5a94"/><rect x="8.7" y="2" width="4.6" height="4.0" rx="0.4" transform="rotate(180 11 11)" fill="#0d5a94"/><rect x="8.7" y="2" width="4.6" height="4.0" rx="0.4" transform="rotate(240 11 11)" fill="#0d5a94"/><rect x="8.7" y="2" width="4.6" height="4.0" rx="0.4" transform="rotate(300 11 11)" fill="#0d5a94"/><circle cx="11" cy="11" r="7.0200000000000005" fill="#0d5a94"/><circle cx="11" cy="11" r="3.2399999999999998" fill="#fff"/></svg>
<div style="left:1667px;top:159px;width:253px;height:1px;background:#e6e6e6;"></div>
<div style="left:1667px;top:167px;width:46px;height:25px;background:#0d5a94"></div>
<div style="left:1667px;top:167px;width:46px;height:25px;overflow:hidden"><div class="t" style="position:absolute;left:-6px;top:4px;font-size:11.9px;line-height:17px;color:#fff">SHIP</div></div>
<div style="left:1723px;top:167px;width:79px;height:25px;background:#0d5a94"></div>
<div class="t" style="left:1738px;top:171.0px;font-size:11.9px;line-height:17px;color:#ffffff;font-weight:400;">COPY SO</div>
<div style="left:1812px;top:167px;width:75px;height:25px;background:#0d5a94"></div>
<div class="t" style="left:1829px;top:171.5px;font-size:11.3px;line-height:16px;color:#ffffff;font-weight:400;">EXPORT</div>
<div style="left:1888px;top:167px;width:22px;height:25px;background:#0d5a94"></div>
<svg style="left:1894.5px;top:177.5px;" width="9" height="5" viewBox="0 0 9 5"><path d="M0 0H9L4.5 5Z" fill="#ffffff"/></svg>
<div style="left:1667px;top:199px;width:238px;height:1px;background:#e3e8ec;"></div>
<div style="left:1699px;top:200px;width:1px;height:82px;background:#e3e8ec;"></div>
<div style="left:1799px;top:200px;width:1px;height:82px;background:#e3e8ec;"></div>
<div style="left:1899px;top:200px;width:1px;height:82px;background:#e3e8ec;"></div>
<div style="left:1667px;top:231px;width:237px;height:1px;background:#1a5f96;"></div>
<div style="left:1667px;top:257px;width:237px;height:1px;background:#1a5f96;"></div>
<div class="t" style="left:1705px;top:206.5px;font-size:12.7px;line-height:18px;color:#222222;font-weight:400;">Brand</div>
<div class="t" style="left:1805px;top:207.0px;font-size:11.8px;line-height:17px;color:#222222;font-weight:400;">Category</div>
<svg style="left:31px;top:75px;" width="19" height="16" viewBox="0 0 19 16"><rect x="1" y="1" width="17" height="14" fill="none" stroke="#a6a6a6" stroke-width="2"/><path d="M1 9.5H18M6.7 9.5V15M12.3 9.5V15" stroke="#a6a6a6" stroke-width="2"/></svg>
<svg style="left:31px;top:118px;" width="19" height="19" viewBox="0 0 19 19"><circle cx="7.5" cy="7.5" r="5.5" fill="none" stroke="#a6a6a6" stroke-width="2.2"/><path d="M11.5 11.5L17.5 17.5" stroke="#a6a6a6" stroke-width="2.5"/></svg>
<svg style="left:31px;top:164px;" width="19" height="16" viewBox="0 0 19 16"><path d="M1 4 V14 H16" fill="none" stroke="#a6a6a6" stroke-width="1.6"/><path d="M4 1 H9 L11 3 H18 V13 H4Z" fill="#a6a6a6"/></svg>
<svg style="left:31px;top:204px;" width="19" height="19" viewBox="0 0 19 19"><circle cx="9.5" cy="10" r="9" fill="#a6a6a6"/><path d="M5 10L8.5 13.5L14.5 7" fill="none" stroke="#15334d" stroke-width="2.4"/></svg>
<div style="left:42px;top:198px;width:14px;height:16px;background:#f2f2f2;border-radius:4px;border:1px solid #999"></div>
<div class="t" style="left:45.5px;top:199.5px;font-size:9px;line-height:13px;color:#222;font-weight:400;">6</div>
<svg style="left:31px;top:249px;" width="19" height="19" viewBox="0 0 19 19"><circle cx="9.5" cy="9.5" r="9" fill="#a6a6a6"/><text x="9.5" y="14.5" font-size="14" font-weight="700" fill="#15334d" text-anchor="middle" font-family="Liberation Sans">$</text></svg>
<svg style="left:31px;top:293px;" width="19" height="19" viewBox="0 0 19 19"><rect x="1" y="1" width="17" height="17" rx="2" fill="#a6a6a6"/><circle cx="9.5" cy="7" r="3" fill="#15334d"/><path d="M3.5 15 A6 5 0 0 1 15.5 15Z" fill="#15334d"/></svg>
<svg style="left:31px;top:339px;" width="19" height="17" viewBox="0 0 19 17"><rect x="1" y="0" width="17" height="3" fill="#a6a6a6"/><path d="M0 4 H19 V8 H0Z" fill="#a6a6a6"/><path d="M1 8 V16 H18 V8" fill="none" stroke="#a6a6a6" stroke-width="2"/><rect x="4" y="10" width="6" height="5" fill="#a6a6a6"/></svg>
<svg style="left:31px;top:382px;" width="19" height="19" viewBox="0 0 19 19"><rect x="1" y="2" width="17" height="17" rx="2" fill="#a6a6a6"/><rect x="7" y="0" width="5" height="4" rx="1" fill="#a6a6a6"/><text x="9.5" y="15.5" font-size="11" font-weight="700" fill="#15334d" text-anchor="middle" font-family="Liberation Sans">?</text></svg>
<svg style="left:31px;top:426px;" width="19" height="19" viewBox="0 0 19 19"><rect x="1" y="2" width="17" height="17" rx="2" fill="#a6a6a6"/><rect x="7" y="0" width="5" height="4" rx="1" fill="#a6a6a6"/><rect x="4" y="7" width="11" height="1.8" fill="#15334d"/><rect x="4" y="10.5" width="11" height="1.8" fill="#15334d"/><rect x="4" y="14" width="7" height="1.8" fill="#15334d"/></svg>
<svg style="left:30px;top:470px;" width="21" height="21" viewBox="0 0 21 21"><path d="M2 2 H10 L19 11 L11 19 L2 10Z" fill="#a6a6a6" transform="rotate(0)"/><circle cx="6" cy="6" r="1.6" fill="#15334d"/></svg>
<svg style="left:30px;top:513px;" width="21" height="21" viewBox="0 0 21 21"><rect x="8.072222222222223" y="1.0" width="4.855555555555555" height="4.222222222222222" rx="0.4" transform="rotate(0 10.5 10.5)" fill="#a6a6a6"/><rect x="8.072222222222223" y="1.0" width="4.855555555555555" height="4.222222222222222" rx="0.4" transform="rotate(60 10.5 10.5)" fill="#a6a6a6"/><rect x="8.072222222222223" y="1.0" width="4.855555555555555" height="4.222222222222222" rx="0.4" transform="rotate(120 10.5 10.5)" fill="#a6a6a6"/><rect x="8.072222222222223" y="1.0" width="4.855555555555555" height="4.222222222222222" rx="0.4" transform="rotate(180 10.5 10.5)" fill="#a6a6a6"/><rect x="8.072222222222223" y="1.0" width="4.855555555555555" height="4.222222222222222" rx="0.4" transform="rotate(240 10.5 10.5)" fill="#a6a6a6"/><rect x="8.072222222222223" y="1.0" width="4.855555555555555" height="4.222222222222222" rx="0.4" transform="rotate(300 10.5 10.5)" fill="#a6a6a6"/><circle cx="10.5" cy="10.5" r="7.41" fill="#a6a6a6"/><circle cx="10.5" cy="10.5" r="3.42" fill="#15334d"/></svg>
<svg style="left:3px;top:544px;" width="7" height="12" viewBox="0 0 7 12"><path d="M0 0 L6 6 L0 12Z" fill="#fff"/></svg>
<svg style="left:30px;top:1006px;" width="22" height="22" viewBox="0 0 22 22"><circle cx="11" cy="6" r="4.5" fill="#a6a6a6"/><path d="M1 21 A10 8 0 0 1 21 21Z" fill="#a6a6a6"/></svg>
<div style="left:56px;top:464px;width:812px;height:596px;box-shadow:0 0 16px 2px rgba(0,0,0,.28)"></div>
<div style="left:56px;top:464px;width:812px;height:576px;background:#b2dfdb;"></div>
<div style="left:56px;top:464px;width:812px;height:1px;background:#8a9a99;"></div>
<div style="left:56px;top:464px;width:1px;height:576px;background:#5b6b6a;"></div>
<div style="left:64px;top:473px;width:240px;height:33px;background:#effefd;border-radius:8px 8px 0 0"></div>
<div style="left:57px;top:506px;width:811px;height:68px;background:#effefd;"></div>
<div style="left:57px;top:574px;width:811px;height:1px;background:#a3adac;"></div>
<svg style="left:56px;top:498px;" width="8" height="8" viewBox="0 0 8 8"><path d="M0 8 A8 8 0 0 0 8 0 V8Z" fill="#effefd"/></svg>
<svg style="left:304px;top:498px;" width="8" height="8" viewBox="0 0 8 8"><path d="M8 8 A8 8 0 0 1 0 0 V8Z" fill="#effefd"/></svg>
<svg style="left:77px;top:485px;" width="15" height="11" viewBox="52 42 88 66"><path d="M58 108h14V74L52 59v43c0 3.32 2.69 6 6 6" fill="#4285f4"/><path d="M120 108h14c3.32 0 6-2.69 6-6V59l-20 15" fill="#34a853"/><path d="M120 48v26l20-15v-8c0-7.42-8.47-11.65-14.4-7.2" fill="#fbbc04"/><path d="M72 74V48l24 18 24-18v26L96 92" fill="#ea4335"/><path d="M52 51v8l20 15V48l-5.6-4.2c-5.94-4.45-14.4-.22-14.4 7.2" fill="#c5221f"/></svg>
<div class="t" style="left:100px;top:481px;width:176px;overflow:hidden;font-size:11.9px;line-height:18px;color:#202124;-webkit-mask-image:linear-gradient(90deg,#000 85%,transparent)">SO was approved for KArina - karina</div>
<svg style="left:282px;top:483px;" width="14" height="14" viewBox="0 0 24 24"><path d="M19 6.41L17.59 5 12 10.59 6.41 5 5 6.41 10.59 12 5 17.59 6.41 19 12 13.41 17.59 19 19 17.59 13.41 12z" fill="#202124"/></svg>
<svg style="left:317px;top:481px;" width="18" height="18" viewBox="0 0 24 24"><path d="M19 13h-6v6h-2v-6H5v-2h6V5h2v6h6v2z" fill="#202124"/></svg>
<svg style="left:69px;top:516px;" width="18" height="18" viewBox="0 0 24 24"><path d="M20 11H7.83l5.59-5.59L12 4l-8 8 8 8 1.41-1.41L7.83 13H20v-2z" fill="#202124"/></svg>
<svg style="left:101px;top:516px;" width="18" height="18" viewBox="0 0 24 24"><path d="M12 4l-1.41 1.41L16.17 11H4v2h12.17l-5.58 5.59L12 20l8-8z" fill="#8ba3a1"/></svg>
<svg style="left:133px;top:516px;" width="18" height="18" viewBox="0 0 24 24"><path d="M17.65 6.35C16.2 4.9 14.21 4 12 4c-4.42 0-7.99 3.58-7.99 8s3.57 8 7.99 8c3.73 0 6.84-2.550 7.73-6h-2.08c-.82 2.33-3.04 4-5.65 4-3.310 0-6-2.69-6-6s2.69-6 6-6c1.66 0 3.14.69 4.22 1.78L13 11h7V4l-2.35 2.35z" fill="#202124"/></svg>
<div style="left:164px;top:511px;width:634px;height:28px;background:#d3dfde;border-radius:14px"></div>
<svg style="left:175px;top:518px;" width="14" height="14" viewBox="0 0 24 24"><path d="M18 8h-1V6c0-2.76-2.24-5-5-5S7 3.24 7 6v2H6c-1.1 0-2 .9-2 2v10c0 1.1.9 2 2 2h12c1.1 0 2-.9 2-2V10c0-1.1-.9-2-2-2zm-2.9 0H8.9V6c0-1.71 1.39-3.1 3.1-3.1 1.71 0 3.1 1.39 3.1 3.1v2z" fill="#5f6368"/></svg>
<div class="t" style="left:198px;top:515px;font-size:13.85px;line-height:20px;color:#60696a"></div>
<svg style="left:770px;top:516px;" width="18" height="18" viewBox="0 0 24 24"><path d="M22 9.24l-7.19-.62L12 2 9.19 8.63 2 9.24l5.46 4.73L5.82 21 12 17.27 18.18 21l-1.63-7.03L22 9.24zM12 15.4l-3.76 2.27 1-4.28-3.32-2.88 4.38-.38L12 6.1l1.71 4.04 4.38.38-3.32 2.88 1 4.28L12 15.4z" fill="#202124"/></svg>
<div class="t" style="left:198px;top:515px;font-size:13.85px;line-height:20px;color:#5f6368"><span style="color:#202124">mail.google.com</span>/mail/u/2/#inbox/FMfcgzGkZZpQPPwPDZxLFGxtRgnFvtMN</div>
<svg style="left:841px;top:482px;" width="15" height="15" viewBox="0 0 15 15"><circle cx="7.5" cy="7.5" r="7.5" fill="#0d2a2a"/><path d="M4 6 H11 L7.5 10Z" fill="#fff"/></svg>
<svg style="left:814px;top:517px;" width="12" height="16" viewBox="0 0 12 16"><rect x="1" y="1" width="10" height="14" rx="1.5" fill="#9fb3b0"/><rect x="3" y="2" width="2" height="12" fill="#1aa387"/><rect x="6.5" y="2" width="2" height="12" fill="#1aa387"/></svg>
<svg style="left:842px;top:515px;" width="18" height="18" viewBox="0 0 24 24"><path d="M20.5 11H19V7c0-1.1-.9-2-2-2h-4V3.5C13 2.12 11.88 1 10.5 1S8 2.12 8 3.5V5H4c-1.1 0-1.99.9-1.99 2v3.8H3.5c1.49 0 2.7 1.21 2.7 2.7s-1.21 2.7-2.7 2.7H2V20c0 1.1.9 2 2 2h3.8v-1.5c0-1.49 1.21-2.7 2.7-2.7 1.49 0 2.7 1.21 2.7 2.7V22H17c1.1 0 2-.9 2-2v-4h1.5c1.38 0 2.5-1.12 2.5-2.5S21.88 11 20.5 11z" fill="#0d2a2a"/></svg>
<svg style="left:70px;top:550px;" width="14" height="14" viewBox="0 0 14 14"><rect x="1.0" y="1.0" width="3" height="3" fill="#ea4335"/><rect x="5.5" y="1.0" width="3" height="3" fill="#4285f4"/><rect x="10.0" y="1.0" width="3" height="3" fill="#fbbc04"/><rect x="1.0" y="5.5" width="3" height="3" fill="#34a853"/><rect x="5.5" y="5.5" width="3" height="3" fill="#ea4335"/><rect x="10.0" y="5.5" width="3" height="3" fill="#4285f4"/><rect x="1.0" y="10.0" width="3" height="3" fill="#34a853"/><rect x="5.5" y="10.0" width="3" height="3" fill="#fbbc04"/><rect x="10.0" y="10.0" width="3" height="3" fill="#ea4335"/></svg>
<div class="t" style="left:94px;top:549.0px;font-size:11.6px;line-height:16px;color:#202124;font-weight:400;">Сервисы</div>
<svg style="left:158px;top:550px;" width="15" height="15" viewBox="0 0 15 15"><circle cx="7.5" cy="7.5" r="7.5" fill="#fff"/><path d="M7.5 0 A7.5 7.5 0 0 0 7.5 15Z" fill="#1a64a8"/><path d="M7.5 0 A7.5 7.5 0 0 1 7.5 15" fill="none"/><rect x="4" y="4.6" width="7" height="1.5" fill="#1a64a8"/><rect x="3" y="6.8" width="9" height="1.5" fill="#fff"/><rect x="4" y="9" width="7" height="1.5" fill="#1a64a8"/></svg>
<div class="t" style="left:183px;top:548.5px;font-size:11.9px;line-height:17px;color:#202124;font-weight:400;">Overwrite rules for...</div>
<svg style="left:307px;top:552px;" width="14" height="10" viewBox="0 0 14 10"><path d="M1.5 8.5 L5 2" stroke="#ff3d57" stroke-width="2.6" stroke-linecap="round"/><path d="M6.5 8.5 L10 2" stroke="#ffcb00" stroke-width="2.6" stroke-linecap="round"/><circle cx="12" cy="8" r="1.5" fill="#00ca72"/></svg>
<div class="t" style="left:330px;top:549.0px;font-size:11.75px;line-height:16px;color:#202124;font-weight:400;">OMS Development...</div>
<svg style="left:457px;top:552px;" width="14" height="10" viewBox="0 0 14 10"><path d="M1.5 8.5 L5 2" stroke="#ff3d57" stroke-width="2.6" stroke-linecap="round"/><path d="M6.5 8.5 L10 2" stroke="#ffcb00" stroke-width="2.6" stroke-linecap="round"/><circle cx="12" cy="8" r="1.5" fill="#00ca72"/></svg>
<div class="t" style="left:480px;top:549.0px;font-size:11.75px;line-height:16px;color:#202124;font-weight:400;">OMS Development...</div>
<svg style="left:606px;top:550px;" width="15" height="15" viewBox="0 0 24 24"><path d="M12 2C6.48 2 2 6.48 2 12s4.48 10 10 10 10-4.48 10-10S17.52 2 12 2zm-1 17.93c-3.95-.49-7-3.85-7-7.93 0-.62.08-1.21.21-1.79L9 15v1c0 1.1.9 2 2 2v1.93zm6.9-2.54c-.26-.81-1-1.39-1.9-1.39h-1v-3c0-.55-.45-1-1-1H8v-2h2c.55 0 1-.45 1-1V7h2c1.1 0 2-.9 2-2v-.41c2.93 1.19 5 4.06 5 7.41 0 2.08-.8 3.97-2.1 5.39z" fill="#0d2a2a"/></svg>
<div class="t" style="left:630px;top:549.0px;font-size:11.65px;line-height:16px;color:#202124;font-weight:400;">Add New Page ‹ W...</div>
<div class="t" style="left:835px;top:545.5px;font-size:15px;line-height:21px;color:#202124;font-weight:700;">»</div>
<div style="left:855px;top:548px;width:1px;height:18px;background:#9fb3b0;"></div>
<div style="left:57px;top:575px;width:811px;height:465px;background:#ffffff;"></div>
<svg style="left:80px;top:596px;" width="24" height="24" viewBox="0 0 24 24"><path d="M3 18h18v-2H3v2zm0-5h18v-2H3v2zm0-7v2h18V6H3z" fill="#5f6368"/></svg>
<svg style="left:122px;top:595px;" width="35" height="26" viewBox="52 42 88 66"><path d="M58 108h14V74L52 59v43c0 3.32 2.69 6 6 6" fill="#4285f4"/><path d="M120 108h14c3.32 0 6-2.69 6-6V59l-20 15" fill="#34a853"/><path d="M120 48v26l20-15v-8c0-7.42-8.47-11.65-14.4-7.2" fill="#fbbc04"/><path d="M72 74V48l24 18 24-18v26L96 92" fill="#ea4335"/><path d="M52 51v8l20 15V48l-5.6-4.2c-5.94-4.45-14.4-.22-14.4 7.2" fill="#c5221f"/></svg>
<div class="t" style="left:172px;top:593.0px;font-size:21.5px;line-height:30px;color:#5f6368;font-weight:400;">Gmail</div>
<div style="left:312px;top:584px;width:495px;height:48px;background:#f1f3f4;border-radius:8px"></div>
<svg style="left:328px;top:596px;" width="24" height="24" viewBox="0 0 24 24"><path d="M15.5 14h-.79l-.28-.27C15.41 12.59 16 11.11 16 9.5 16 5.91 13.09 3 9.5 3S3 5.91 3 9.5 5.91 16 9.5 16c1.61 0 3.09-.59 4.230-1.57l.27.28v.79l5 4.99L20.49 19l-4.99-5zm-6 0C7.01 14 5 11.99 5 9.5S7.010 5 9.5 5 14 7.01 14 9.5 11.99 14 9.5 14z" fill="#5f6368"/></svg>
<div class="t" style="left:369px;top:596.5px;font-size:16.1px;line-height:23px;color:#5f6368;font-weight:400;">Поиск в почте</div>
<svg style="left:767px;top:596px;" width="24" height="24" viewBox="0 0 24 24"><path d="M3 17v2h6v-2H3zM3 5v2h10V5H3zm10 16v-2h8v-2h-8v-2h-2v6h2zM7 9v2H3v2h4v2h2V9H7zm14 4v-2H11v2h10zm-6-4h2V7h4V5h-4V3h-2v6z" fill="#5f6368"/></svg>
<svg style="left:828px;top:596px;" width="24" height="24" viewBox="0 0 24 24"><path d="M11 18h2v-2h-2v2zm1-16C6.48 2 2 6.48 2 12s4.48 10 10 10 10-4.48 10-10S17.52 2 12 2zm0 18c-4.41 0-8-3.59-8-8s3.59-8 8-8 8 3.59 8 8-3.59 8-8 8zm0-14c-2.21 0-4 1.79-4 4h2c0-1.1.9-2 2-2s2 .9 2 2c0 2-3 1.75-3 5h2c0-2.25 3-2.5 3-5 0-2.21-1.79-4-4-4z" fill="#5f6368"/></svg>
<div style="left:57px;top:639px;width:811px;height:1px;background:#e6e8eb;"></div>
<div style="left:64px;top:656px;width:145px;height:48px;background:#fff;border-radius:24px;box-shadow:0 1px 2px 0 rgba(60,64,67,.30),0 1px 3px 1px rgba(60,64,67,.15)"></div>
<svg style="left:80px;top:668px;" width="24" height="24" viewBox="0 0 24 24"><path d="M10.2 0h3.6v10.2h-3.6z" fill="#ea4335"/><path d="M13.8 10.2h10.2v3.6h-10.2z" fill="#4285f4"/><path d="M10.2 13.8h3.6v10.2h-3.6z" fill="#34a853"/><path d="M0 10.2h10.2v3.6H0z" fill="#fbbc04"/><rect x="10.2" y="10.2" width="3.6" height="3.6" fill="#c5221f"/></svg>
<div class="t" style="left:120px;top:669.5px;font-size:14.5px;line-height:20px;color:#3c4043;font-weight:500;">Написать</div>
<div style="left:56px;top:719px;width:240px;height:32px;background:#fce8e6;border-radius:0 16px 16px 0"></div>
<svg style="left:82px;top:725px;" width="20" height="20" viewBox="0 0 24 24"><path d="M19 3H4.99c-1.11 0-1.98.89-1.98 2L3 19c0 1.1.88 2 1.99 2H19c1.1 0 2-.9 2-2V5c0-1.11-.9-2-2-2zm0 12h-4c0 1.66-1.35 3-3 3s-3-1.34-3-3H4.99V5H19v10z" fill="#d93025"/></svg>
<div class="t" style="left:120px;top:725.5px;font-size:13.6px;line-height:19px;color:#d93025;font-weight:700;">Входящие</div>
<div class="t" style="right:1637px;top:726.0px;font-size:12.5px;line-height:18px;color:#d93025;font-weight:700;text-align:right;">3</div>
<svg style="left:82px;top:757px;" width="20" height="20" viewBox="0 0 24 24"><path d="M12 17.27L18.18 21l-1.64-7.03L22 9.24l-7.19-.61L12 2 9.19 8.63 2 9.24l5.46 4.73L5.82 21z" fill="#5f6368"/></svg>
<div class="t" style="left:120px;top:757.0px;font-size:14.5px;line-height:20px;color:#202124;font-weight:400;">Помеченные</div>
<svg style="left:82px;top:789px;" width="20" height="20" viewBox="0 0 24 24"><path d="M12 2C6.5 2 2 6.5 2 12s4.5 10 10 10 10-4.5 10-10S17.5 2 12 2zm4.2 14.2L11 13V7h1.5v5.2l4.5 2.7-.8 1.3z" fill="#5f6368"/></svg>
<div class="t" style="left:120px;top:789.0px;font-size:14.5px;line-height:20px;color:#202124;font-weight:400;">Отложенные</div>
<svg style="left:82px;top:821px;" width="20" height="20" viewBox="0 0 24 24"><path d="M2.01 21L23 12 2.01 3 2 10l15 2-15 2z" fill="#5f6368"/></svg>
<div class="t" style="left:120px;top:821.0px;font-size:14.5px;line-height:20px;color:#202124;font-weight:400;">Отправленные</div>
<svg style="left:82px;top:853px;" width="20" height="20" viewBox="0 0 24 24"><path d="M6 2c-1.1 0-1.99.9-1.99 2L4 20c0 1.1.89 2 1.99 2H18c1.1 0 2-.9 2-2V8l-6-6H6zm7 7V3.5L18.5 9H13z" fill="#5f6368"/></svg>
<div class="t" style="left:120px;top:853.0px;font-size:14.5px;line-height:20px;color:#202124;font-weight:400;">Черновики</div>
<svg style="left:82px;top:886px;" width="20" height="20" viewBox="0 0 24 24"><path d="M16.59 8.59L12 13.17 7.41 8.59 6 10l6 6 6-6z" fill="#5f6368"/></svg>
<div class="t" style="left:120px;top:886.0px;font-size:14.5px;line-height:20px;color:#202124;font-weight:400;">Ещё</div>
<div style="left:57px;top:913px;width:255px;height:1px;background:#e6e8eb;"></div>
<div class="t" style="left:82px;top:925.5px;font-size:15px;line-height:21px;color:#202124;font-weight:500;">Meet</div>
<svg style="left:82px;top:959px;" width="20" height="20" viewBox="0 0 24 24"><path d="M17 10.5V7c0-.55-.45-1-1-1H4c-.55 0-1 .45-1 1v10c0 .55.45 1 1 1h12c.55 0 1-.45 1-1v-3.5l4 4v-11l-4 4z" fill="#5f6368"/></svg>
<div class="t" style="left:120px;top:959.0px;font-size:14.5px;line-height:20px;color:#202124;font-weight:400;">Новая встреча</div>
<svg style="left:82px;top:991px;" width="20" height="20" viewBox="0 0 24 24"><path d="M20 5H4c-1.1 0-1.99.9-1.99 2L2 17c0 1.1.9 2 2 2h16c1.1 0 2-.9 2-2V7c0-1.1-.9-2-2-2zm-9 3h2v2h-2V8zm0 3h2v2h-2v-2zM8 8h2v2H8V8zm0 3h2v2H8v-2zm-1 2H5v-2h2v2zm0-3H5V8h2v2zm9 7H8v-2h8v2zm0-4h-2v-2h2v2zm0-3h-2V8h2v2zm3 3h-2v-2h2v2zm0-3h-2V8h2v2z" fill="#5f6368"/></svg>
<div class="t" style="left:120px;top:991.0px;font-size:14.5px;line-height:20px;color:#202124;font-weight:400;">Перейти на встречу</div>
<div style="left:57px;top:1024px;width:255px;height:1px;background:#e6e8eb;"></div>
<svg style="left:328px;top:654px;" width="20" height="20" viewBox="0 0 24 24"><path d="M20 11H7.83l5.59-5.59L12 4l-8 8 8 8 1.41-1.41L7.83 13H20v-2z" fill="#5f6368"/></svg>
<svg style="left:386px;top:655px;" width="18" height="18" viewBox="0 0 24 24"><path d="M20.54 5.23l-1.39-1.68C18.88 3.21 18.47 3 18 3H6c-.47 0-.88.21-1.16.55L3.46 5.23C3.17 5.57 3 6.02 3 6.5V19c0 1.1.9 2 2 2h14c1.1 0 2-.9 2-2V6.5c0-.48-.17-.93-.46-1.27zM12 17.5L6.5 12H10v-2h4v2h3.5L12 17.5zM5.12 5l.81-1h12l.94 1H5.12z" fill="#5f6368"/></svg>
<svg style="left:430px;top:655px;" width="18" height="18" viewBox="0 0 24 24"><path d="M12 2C6.48 2 2 6.48 2 12s4.48 10 10 10 10-4.48 10-10S17.52 2 12 2zm1 15h-2v-2h2v2zm0-4h-2V7h2v6z" fill="#5f6368"/></svg>
<svg style="left:474px;top:655px;" width="18" height="18" viewBox="0 0 24 24"><path d="M6 19c0 1.1.9 2 2 2h8c1.1 0 2-.9 2-2V7H6v12zM19 4h-3.5l-1-1h-5l-1 1H5v2h14V4z" fill="#5f6368"/></svg>
<svg style="left:532px;top:655px;" width="18" height="18" viewBox="0 0 24 24"><path d="M18.83 7h-2.6L10.5 4 4 7.4V17c-1.1 0-2-.9-2-2V7.17c0-.53.32-1.09.8-1.34L10.5 2l7.54 3.83c.43.23.73.7.79 1.17zM20 8H7c-1.1 0-2 .9-2 2v9c0 1.1.9 2 2 2h13c1.1 0 2-.9 2-2v-9c0-1.1-.9-2-2-2zm0 3.67L13.5 15 7 11.67V10l6.5 3.33L20 10v1.67z" fill="#5f6368"/></svg>
<svg style="left:577px;top:655px;" width="18" height="18" viewBox="0 0 24 24"><path d="M12 2C6.5 2 2 6.5 2 12s4.5 10 10 10 10-4.5 10-10S17.5 2 12 2zm4.2 14.2L11 13V7h1.5v5.2l4.5 2.7-.8 1.3z" fill="#5f6368"/></svg>
<svg style="left:621px;top:655px;" width="18" height="18" viewBox="0 0 24 24"><path d="M12 2C6.48 2 2 6.48 2 12s4.48 10 10 10 10-4.48 10-10S17.52 2 12 2zm-2 15l-5-5 1.41-1.41L10 14.17l7.59-7.59L19 8l-9 9z" fill="#5f6368"/></svg>
<svg style="left:633px;top:667px;" width="8" height="8" viewBox="0 0 8 8"><path d="M3 0h2v3h3v2H5v3H3V5H0V3h3z" fill="#5f6368"/><path d="M3 0h2v3h3v2H5v3H3V5H0V3h3z" fill="none" stroke="#fff" stroke-width="0.8"/><path d="M3 0h2v3h3v2H5v3H3V5H0V3h3z" fill="#5f6368"/></svg>
<svg style="left:681px;top:655px;" width="18" height="18" viewBox="0 0 24 24"><path d="M20 6h-8l-2-2H4c-1.1 0-1.99.9-1.99 2L2 18c0 1.1.9 2 2 2h16c1.1 0 2-.9 2-2V8c0-1.1-.9-2-2-2zm-6 12v-3h-4v-4h4V8l5 5-5 5z" fill="#5f6368"/></svg>
<svg style="left:725px;top:655px;" width="18" height="18" viewBox="0 0 24 24"><path d="M17.63 5.84C17.27 5.33 16.67 5 16 5L5 5.01C3.9 5.01 3 5.9 3 7v10c0 1.1.9 1.99 2 1.99L16 19c.67 0 1.27-.33 1.63-.84L22 12l-4.37-6.16z" fill="#5f6368"/></svg>
<svg style="left:765px;top:655px;" width="18" height="18" viewBox="0 0 24 24"><path d="M12 8c1.1 0 2-.9 2-2s-.9-2-2-2-2 .9-2 2 .9 2 2 2zm0 2c-1.1 0-2 .9-2 2s.9 2 2 2 2-.9 2-2-.9-2-2-2zm0 6c-1.1 0-2 .9-2 2s.9 2 2 2 2-.9 2-2-.9-2-2-2z" fill="#5f6368"/></svg>
<div style="left:511px;top:652px;width:1px;height:24px;background:#dadce0;"></div>
<div style="left:659px;top:652px;width:1px;height:24px;background:#dadce0;"></div>
<div class="t" style="right:1072px;top:655.0px;font-size:12.7px;line-height:18px;color:#5f6368;font-weight:400;text-align:right;">1 из 5</div>
<div style="left:312px;top:687px;width:556px;height:1px;background:#e6e8eb;"></div>
<div class="t" style="left:384px;top:706.0px;font-size:21.9px;line-height:31px;color:#202124;font-weight:400;">SO was approved for KArina</div>
<div style="left:673px;top:713px;width:80px;height:17px;background:#dddddd;border-radius:4px"></div>
<div class="t" style="left:677px;top:713.0px;font-size:12.3px;line-height:17px;color:#5f6368;font-weight:400;">Входящие ×</div>
<div style="left:326px;top:767px;width:44px;height:42px;background:#f1f3f4;border-radius:50%"></div>
<svg style="left:334px;top:771px;" width="28" height="28" viewBox="0 0 24 24"><path d="M12 12c2.21 0 4-1.79 4-4s-1.79-4-4-4-4 1.79-4 4 1.79 4 4 4zm0 2c-2.67 0-8 1.34-8 4v2h16v-2c0-2.66-5.33-4-8-4z" fill="#c4c7c5"/></svg>
<div class="t" style="left:384px;top:763.5px;font-size:13.6px;line-height:19px;color:#202124;font-weight:700;">omsapptest@gmail.com</div>
<div class="t" style="left:545px;top:764.5px;font-size:12.15px;line-height:17px;color:#5f6368;font-weight:400;">&lt;omsapptest@gma...</div>
<div class="t" style="left:673px;top:764.0px;font-size:12.6px;line-height:18px;color:#5f6368;font-weight:400;">13:22 (0 минут назад)</div>
<svg style="left:819px;top:763px;" width="20" height="20" viewBox="0 0 24 24"><path d="M22 9.24l-7.19-.62L12 2 9.19 8.63 2 9.24l5.46 4.73L5.82 21 12 17.27 18.18 21l-1.63-7.03L22 9.24zM12 15.4l-3.76 2.27 1-4.28-3.32-2.88 4.38-.38L12 6.1l1.71 4.04 4.38.38-3.32 2.88 1 4.28L12 15.4z" fill="#5f6368"/></svg>
<div class="t" style="left:384px;top:784.5px;font-size:12.6px;line-height:18px;color:#5f6368;font-weight:400;">кому: test@gmail.com, мне</div>
<svg style="left:541px;top:786px;" width="16" height="16" viewBox="0 0 24 24"><path d="M7 10l5 5 5-5z" fill="#5f6368"/></svg>
<div class="t" style="left:384px;top:812.0px;font-size:12.97px;line-height:18px;color:#202124;font-weight:400;">SO-0045996 for KArina was approved by KArina</div>
<div style="left:330px;top:742px;width:490px;height:115px;border:4px solid #f25449;box-shadow:2px 3px 3px rgba(0,0,0,.55),inset 2px 2px 2px rgba(0,0,0,.7)"></div>
<div style="left:384px;top:869px;width:120px;height:36px;border:1px solid #dadce0;border-radius:4px;background:#fff"></div>
<svg style="left:396px;top:877px;" width="20" height="20" viewBox="0 0 24 24"><path d="M10 9V5l-7 7 7 7v-4.1c5 0 8.5 1.6 11 5.1-1-5-4-10-11-11z" fill="#5f6368"/></svg>
<div class="t" style="left:424px;top:877.5px;font-size:13.8px;line-height:19px;color:#5f6368;font-weight:500;">Ответить</div>
<div style="left:517px;top:869px;width:157px;height:36px;border:1px solid #dadce0;border-radius:4px;background:#fff"></div>
<svg style="left:529px;top:877px;" width="20" height="20" viewBox="0 0 24 24"><path d="M7 8V5l-7 7 7 7v-3l-4-4 4-4zm6 1V5l-7 7 7 7v-4.1c5 0 8.5 1.6 11 5.1-1-5-4-10-11-11z" fill="#5f6368"/></svg>
<div class="t" style="left:557px;top:877.0px;font-size:14.2px;line-height:20px;color:#5f6368;font-weight:500;">Ответить всем</div>
<div style="left:687px;top:869px;width:130px;height:36px;border:1px solid #dadce0;border-radius:4px;background:#fff"></div>
<svg style="left:699px;top:877px;" width="20" height="20" viewBox="0 0 24 24"><path d="M12 8V4l8 8-8 8v-4H4V8z" fill="#5f6368"/></svg>
<div class="t" style="left:727px;top:877.0px;font-size:14.2px;line-height:20px;color:#5f6368;font-weight:500;">Переслать</div>
<div style="left:868px;top:449px;width:953px;height:611px;box-shadow:0 0 16px 2px rgba(0,0,0,.28)"></div>
<div style="left:868px;top:449px;width:953px;height:591px;background:#b2dfdb;"></div>
<div style="left:868px;top:449px;width:953px;height:1px;background:#8a9a99;"></div>
<div style="left:868px;top:449px;width:1px;height:591px;background:#5b6b6a;"></div>
<div style="left:876px;top:458px;width:240px;height:33px;background:#effefd;border-radius:8px 8px 0 0"></div>
<div style="left:869px;top:491px;width:952px;height:68px;background:#effefd;"></div>
<div style="left:869px;top:559px;width:952px;height:1px;background:#a3adac;"></div>
<svg style="left:868px;top:483px;" width="8" height="8" viewBox="0 0 8 8"><path d="M0 8 A8 8 0 0 0 8 0 V8Z" fill="#effefd"/></svg>
<svg style="left:1116px;top:483px;" width="8" height="8" viewBox="0 0 8 8"><path d="M8 8 A8 8 0 0 1 0 0 V8Z" fill="#effefd"/></svg>
<svg style="left:889px;top:470px;" width="15" height="11" viewBox="52 42 88 66"><path d="M58 108h14V74L52 59v43c0 3.32 2.69 6 6 6" fill="#4285f4"/><path d="M120 108h14c3.32 0 6-2.69 6-6V59l-20 15" fill="#34a853"/><path d="M120 48v26l20-15v-8c0-7.42-8.47-11.65-14.4-7.2" fill="#fbbc04"/><path d="M72 74V48l24 18 24-18v26L96 92" fill="#ea4335"/><path d="M52 51v8l20 15V48l-5.6-4.2c-5.94-4.45-14.4-.22-14.4 7.2" fill="#c5221f"/></svg>
<div class="t" style="left:912px;top:466px;width:176px;overflow:hidden;font-size:11.9px;line-height:18px;color:#202124;-webkit-mask-image:linear-gradient(90deg,#000 85%,transparent)">Входящие (9 142) - omsapptest@gmail.com</div>
<svg style="left:1094px;top:468px;" width="14" height="14" viewBox="0 0 24 24"><path d="M19 6.41L17.59 5 12 10.59 6.41 5 5 6.41 10.59 12 5 17.59 6.41 19 12 13.41 17.59 19 19 17.59 13.41 12z" fill="#202124"/></svg>
<svg style="left:1129px;top:466px;" width="18" height="18" viewBox="0 0 24 24"><path d="M19 13h-6v6h-2v-6H5v-2h6V5h2v6h6v2z" fill="#202124"/></svg>
<svg style="left:881px;top:501px;" width="18" height="18" viewBox="0 0 24 24"><path d="M20 11H7.83l5.59-5.59L12 4l-8 8 8 8 1.41-1.41L7.83 13H20v-2z" fill="#202124"/></svg>
<svg style="left:913px;top:501px;" width="18" height="18" viewBox="0 0 24 24"><path d="M12 4l-1.41 1.41L16.17 11H4v2h12.17l-5.58 5.59L12 20l8-8z" fill="#8ba3a1"/></svg>
<svg style="left:945px;top:501px;" width="18" height="18" viewBox="0 0 24 24"><path d="M17.65 6.35C16.2 4.9 14.21 4 12 4c-4.42 0-7.99 3.58-7.99 8s3.57 8 7.99 8c3.73 0 6.84-2.550 7.73-6h-2.08c-.82 2.33-3.04 4-5.65 4-3.310 0-6-2.69-6-6s2.69-6 6-6c1.66 0 3.14.69 4.22 1.78L13 11h7V4l-2.35 2.35z" fill="#202124"/></svg>
<div style="left:976px;top:496px;width:634px;height:28px;background:#d3dfde;border-radius:14px"></div>
<svg style="left:987px;top:503px;" width="14" height="14" viewBox="0 0 24 24"><path d="M18 8h-1V6c0-2.76-2.24-5-5-5S7 3.24 7 6v2H6c-1.1 0-2 .9-2 2v10c0 1.1.9 2 2 2h12c1.1 0 2-.9 2-2V10c0-1.1-.9-2-2-2zm-2.9 0H8.9V6c0-1.71 1.39-3.1 3.1-3.1 1.71 0 3.1 1.39 3.1 3.1v2z" fill="#5f6368"/></svg>
<div class="t" style="left:1010px;top:500px;font-size:14.56px;line-height:20px;color:#60696a"></div>
<svg style="left:1582px;top:501px;" width="18" height="18" viewBox="0 0 24 24"><path d="M22 9.24l-7.19-.62L12 2 9.19 8.63 2 9.24l5.46 4.73L5.82 21 12 17.27 18.18 21l-1.63-7.03L22 9.24zM12 15.4l-3.76 2.27 1-4.28-3.32-2.88 4.38-.38L12 6.1l1.71 4.04 4.38.38-3.32 2.88 1 4.28L12 15.4z" fill="#202124"/></svg>
<div class="t" style="left:1010px;top:500px;font-size:14.56px;line-height:20px;color:#5f6368"><span style="color:#202124">mail.google.com</span>/mail/u/1/#inbox</div>
<svg style="left:1653px;top:467px;" width="15" height="15" viewBox="0 0 15 15"><circle cx="7.5" cy="7.5" r="7.5" fill="#0d2a2a"/><path d="M4 6 H11 L7.5 10Z" fill="#fff"/></svg>
<div style="left:1700px;top:464px;width:11px;height:1px;background:#202124;"></div>
<div style="left:1746px;top:459px;width:11px;height:11px;border:1.2px solid #202124"></div>
<svg style="left:1792px;top:459px;" width="12" height="12" viewBox="0 0 12 12"><path d="M0.5 0.5L11.5 11.5M11.5 0.5L0.5 11.5" stroke="#202124" stroke-width="1.2"/></svg>
<svg style="left:1626px;top:502px;" width="12" height="16" viewBox="0 0 12 16"><rect x="1" y="1" width="10" height="14" rx="1.5" fill="#9fb3b0"/><rect x="3" y="2" width="2" height="12" fill="#1aa387"/><rect x="6.5" y="2" width="2" height="12" fill="#1aa387"/></svg>
<svg style="left:1655px;top:500px;" width="18" height="18" viewBox="0 0 24 24"><path d="M20.5 11H19V7c0-1.1-.9-2-2-2h-4V3.5C13 2.12 11.88 1 10.5 1S8 2.12 8 3.5V5H4c-1.1 0-1.99.9-1.99 2v3.8H3.5c1.49 0 2.7 1.21 2.7 2.7s-1.21 2.7-2.7 2.7H2V20c0 1.1.9 2 2 2h3.8v-1.5c0-1.49 1.21-2.7 2.7-2.7 1.49 0 2.7 1.21 2.7 2.7V22H17c1.1 0 2-.9 2-2v-4h1.5c1.38 0 2.5-1.12 2.5-2.5S21.88 11 20.5 11z" fill="#0d2a2a"/></svg>
<div style="left:1685px;top:499px;width:22px;height:22px;background:#8e24aa;border-radius:50%"></div>
<div class="t" style="left:1691px;top:501.5px;font-size:12px;line-height:17px;color:#ffffff;font-weight:400;">K</div>
<div style="left:1715px;top:496px;width:96px;height:28px;border:1px solid #f29900;border-radius:14px;background:#fdf6ea"></div>
<div class="t" style="left:1727px;top:501.5px;font-size:11.9px;line-height:17px;color:#c26401;font-weight:400;">Обновить</div>
<svg style="left:1797px;top:502px;" width="4" height="16" viewBox="0 0 4 16"><circle cx="2" cy="2" r="1.6" fill="#f29900"/><circle cx="2" cy="8" r="1.6" fill="#f29900"/><circle cx="2" cy="14" r="1.6" fill="#f29900"/></svg>
<svg style="left:882px;top:535px;" width="14" height="14" viewBox="0 0 14 14"><rect x="1.0" y="1.0" width="3" height="3" fill="#ea4335"/><rect x="5.5" y="1.0" width="3" height="3" fill="#4285f4"/><rect x="10.0" y="1.0" width="3" height="3" fill="#fbbc04"/><rect x="1.0" y="5.5" width="3" height="3" fill="#34a853"/><rect x="5.5" y="5.5" width="3" height="3" fill="#ea4335"/><rect x="10.0" y="5.5" width="3" height="3" fill="#4285f4"/><rect x="1.0" y="10.0" width="3" height="3" fill="#34a853"/><rect x="5.5" y="10.0" width="3" height="3" fill="#fbbc04"/><rect x="10.0" y="10.0" width="3" height="3" fill="#ea4335"/></svg>
<div class="t" style="left:906px;top:534.0px;font-size:11.6px;line-height:16px;color:#202124;font-weight:400;">Сервисы</div>
<svg style="left:970px;top:535px;" width="15" height="15" viewBox="0 0 15 15"><circle cx="7.5" cy="7.5" r="7.5" fill="#fff"/><path d="M7.5 0 A7.5 7.5 0 0 0 7.5 15Z" fill="#1a64a8"/><path d="M7.5 0 A7.5 7.5 0 0 1 7.5 15" fill="none"/><rect x="4" y="4.6" width="7" height="1.5" fill="#1a64a8"/><rect x="3" y="6.8" width="9" height="1.5" fill="#fff"/><rect x="4" y="9" width="7" height="1.5" fill="#1a64a8"/></svg>
<div class="t" style="left:995px;top:533.5px;font-size:11.9px;line-height:17px;color:#202124;font-weight:400;">Overwrite rules for...</div>
<svg style="left:1119px;top:537px;" width="14" height="10" viewBox="0 0 14 10"><path d="M1.5 8.5 L5 2" stroke="#ff3d57" stroke-width="2.6" stroke-linecap="round"/><path d="M6.5 8.5 L10 2" stroke="#ffcb00" stroke-width="2.6" stroke-linecap="round"/><circle cx="12" cy="8" r="1.5" fill="#00ca72"/></svg>
<div class="t" style="left:1142px;top:534.0px;font-size:11.75px;line-height:16px;color:#202124;font-weight:400;">OMS Development...</div>
<svg style="left:1269px;top:537px;" width="14" height="10" viewBox="0 0 14 10"><path d="M1.5 8.5 L5 2" stroke="#ff3d57" stroke-width="2.6" stroke-linecap="round"/><path d="M6.5 8.5 L10 2" stroke="#ffcb00" stroke-width="2.6" stroke-linecap="round"/><circle cx="12" cy="8" r="1.5" fill="#00ca72"/></svg>
<div class="t" style="left:1292px;top:534.0px;font-size:11.75px;line-height:16px;color:#202124;font-weight:400;">OMS Development...</div>
<svg style="left:1418px;top:535px;" width="15" height="15" viewBox="0 0 24 24"><path d="M12 2C6.48 2 2 6.48 2 12s4.48 10 10 10 10-4.48 10-10S17.52 2 12 2zm-1 17.93c-3.95-.49-7-3.85-7-7.93 0-.62.08-1.21.21-1.79L9 15v1c0 1.1.9 2 2 2v1.93zm6.9-2.54c-.26-.81-1-1.39-1.9-1.39h-1v-3c0-.55-.45-1-1-1H8v-2h2c.55 0 1-.45 1-1V7h2c1.1 0 2-.9 2-2v-.41c2.93 1.19 5 4.06 5 7.41 0 2.08-.8 3.97-2.1 5.39z" fill="#0d2a2a"/></svg>
<div class="t" style="left:1442px;top:534.0px;font-size:11.65px;line-height:16px;color:#202124;font-weight:400;">Add New Page ‹ W...</div>
<div class="t" style="left:1647px;top:530.5px;font-size:15px;line-height:21px;color:#202124;font-weight:700;">»</div>
<div style="left:1668px;top:533px;width:1px;height:18px;background:#9fb3b0;"></div>
<svg style="left:1677px;top:533px;" width="18" height="18" viewBox="0 0 24 24"><path d="M19 5v14H5V5h14m1.1-2H3.9c-.5 0-.9.4-.9.9v16.2c0 .4.4.9.9.9h16.2c.4 0 .9-.5.9-.9V3.9c0-.5-.5-.9-.9-.9zM11 7h6v2h-6V7zm0 4h6v2h-6v-2zm0 4h6v2h-6zM7 7h2v2H7zm0 4h2v2H7zm0 4h2v2H7z" fill="#202124"/></svg>
<div class="t" style="left:1703px;top:534.0px;font-size:11.75px;line-height:16px;color:#202124;font-weight:400;">Список для чтения</div>
<div style="left:869px;top:560px;width:952px;height:480px;background:#ffffff;"></div>
<svg style="left:892px;top:581px;" width="24" height="24" viewBox="0 0 24 24"><path d="M3 18h18v-2H3v2zm0-5h18v-2H3v2zm0-7v2h18V6H3z" fill="#5f6368"/></svg>
<svg style="left:934px;top:580px;" width="35" height="26" viewBox="52 42 88 66"><path d="M58 108h14V74L52 59v43c0 3.32 2.69 6 6 6" fill="#4285f4"/><path d="M120 108h14c3.32 0 6-2.69 6-6V59l-20 15" fill="#34a853"/><path d="M120 48v26l20-15v-8c0-7.42-8.47-11.65-14.4-7.2" fill="#fbbc04"/><path d="M72 74V48l24 18 24-18v26L96 92" fill="#ea4335"/><path d="M52 51v8l20 15V48l-5.6-4.2c-5.94-4.45-14.4-.22-14.4 7.2" fill="#c5221f"/></svg>
<div class="t" style="left:985px;top:578.0px;font-size:21.5px;line-height:30px;color:#5f6368;font-weight:400;">Gmail</div>
<div style="left:1124px;top:569px;width:496px;height:48px;background:#f1f3f4;border-radius:8px"></div>
<svg style="left:1141px;top:581px;" width="24" height="24" viewBox="0 0 24 24"><path d="M15.5 14h-.79l-.28-.27C15.41 12.59 16 11.11 16 9.5 16 5.91 13.09 3 9.5 3S3 5.91 3 9.5 5.91 16 9.5 16c1.61 0 3.09-.59 4.230-1.57l.27.28v.79l5 4.99L20.49 19l-4.99-5zm-6 0C7.01 14 5 11.99 5 9.5S7.010 5 9.5 5 14 7.01 14 9.5 11.99 14 9.5 14z" fill="#5f6368"/></svg>
<div class="t" style="left:1181px;top:581.5px;font-size:16.1px;line-height:23px;color:#5f6368;font-weight:400;">Поиск в почте</div>
<svg style="left:1579px;top:581px;" width="24" height="24" viewBox="0 0 24 24"><path d="M3 17v2h6v-2H3zM3 5v2h10V5H3zm10 16v-2h8v-2h-8v-2h-2v6h2zM7 9v2H3v2h4v2h2V9H7zm14 4v-2H11v2h10zm-6-4h2V7h4V5h-4V3h-2v6z" fill="#5f6368"/></svg>
<svg style="left:1639px;top:581px;" width="24" height="24" viewBox="0 0 24 24"><path d="M11 18h2v-2h-2v2zm1-16C6.48 2 2 6.48 2 12s4.48 10 10 10 10-4.48 10-10S17.52 2 12 2zm0 18c-4.41 0-8-3.59-8-8s3.59-8 8-8 8 3.59 8 8-3.59 8-8 8zm0-14c-2.21 0-4 1.79-4 4h2c0-1.1.9-2 2-2s2 .9 2 2c0 2-3 1.75-3 5h2c0-2.25 3-2.5 3-5 0-2.21-1.79-4-4-4z" fill="#5f6368"/></svg>
<svg style="left:1683px;top:581px;" width="24" height="24" viewBox="0 0 24 24"><path d="M19.43 12.98c.04-.32.07-.64.07-.98 0-.34-.03-.66-.07-.98l2.11-1.65c.19-.15.24-.42.12-.64l-2-3.46c-.09-.16-.26-.25-.44-.25-.06 0-.12.01-.17.03l-2.49 1c-.52-.4-1.08-.73-1.69-.98l-.38-2.65C14.46 2.18 14.25 2 14 2h-4c-.25 0-.46.18-.49.42l-.38 2.65c-.61.25-1.17.59-1.69.98l-2.49-1c-.06-.02-.12-.03-.18-.03-.17 0-.34.09-.43.25l-2 3.46c-.13.22-.07.49.12.64l2.11 1.65c-.04.32-.07.65-.07.98 0 .33.03.66.07.98l-2.11 1.65c-.19.15-.24.42-.12.64l2 3.46c.09.16.26.25.44.25.06 0 .12-.01.17-.03l2.49-1c.52.4 1.08.73 1.690.98l.38 2.65c.03.24.24.42.49.42h4c.25 0 .46-.18.49-.42l.38-2.65c.61-.25 1.17-.59 1.69-.98l2.49 1c.06.02.12.03.18.03.17 0 .34-.09.43-.25l2-3.46c.12-.22.07-.49-.12-.64l-2.11-1.65zM12 15.5c-1.93 0-3.5-1.57-3.5-3.5s1.57-3.5 3.5-3.5 3.5 1.57 3.5 3.5-1.57 3.5-3.5 3.5z" fill="none"/></svg>
<svg style="left:1683px;top:581px;" width="24" height="24" viewBox="0 0 24 24"><path d="M19.43 12.98c.04-.32.07-.64.07-.98 0-.34-.03-.66-.07-.98l2.11-1.65c.19-.15.24-.42.12-.64l-2-3.46c-.09-.16-.26-.25-.44-.25-.06 0-.12.01-.17.03l-2.49 1c-.52-.4-1.08-.73-1.69-.98l-.38-2.65C14.46 2.18 14.25 2 14 2h-4c-.25 0-.46.18-.49.42l-.38 2.65c-.61.25-1.17.59-1.69.98l-2.49-1c-.06-.02-.12-.03-.18-.03-.17 0-.34.09-.43.25l-2 3.46c-.13.22-.07.49.12.64l2.11 1.65c-.04.32-.07.65-.07.98 0 .33.03.66.07.98l-2.11 1.65c-.19.15-.24.42-.12.64l2 3.46c.09.16.26.25.44.25.06 0 .12-.01.17-.03l2.49-1c.52.4 1.08.73 1.690.98l.38 2.65c.03.24.24.42.49.42h4c.25 0 .46-.18.49-.42l.38-2.65c.61-.25 1.17-.59 1.69-.98l2.49 1c.06.02.12.03.18.03.17 0 .34-.09.43-.25l2-3.46c.12-.22.07-.49-.12-.64l-2.11-1.65zM12 15.5c-1.93 0-3.5-1.57-3.5-3.5s1.57-3.5 3.5-3.5 3.5 1.57 3.5 3.5-1.57 3.5-3.5 3.5z" fill="none" stroke="#5f6368" stroke-width="1.8" transform="translate(1.2 1.2) scale(0.9)"/></svg>
<svg style="left:1727px;top:581px;" width="24" height="24" viewBox="0 0 24 24"><circle cx="5" cy="5" r="2" fill="#5f6368"/><circle cx="12" cy="5" r="2" fill="#5f6368"/><circle cx="19" cy="5" r="2" fill="#5f6368"/><circle cx="5" cy="12" r="2" fill="#5f6368"/><circle cx="12" cy="12" r="2" fill="#5f6368"/><circle cx="19" cy="12" r="2" fill="#5f6368"/><circle cx="5" cy="19" r="2" fill="#5f6368"/><circle cx="12" cy="19" r="2" fill="#5f6368"/><circle cx="19" cy="19" r="2" fill="#5f6368"/></svg>
<div style="left:1770px;top:577px;width:32px;height:32px;background:#004a3a;border-radius:50%"></div>
<div class="t" style="left:1779px;top:581.0px;font-size:17px;line-height:24px;color:#ffffff;font-weight:400;">O</div>
<div style="left:869px;top:625px;width:952px;height:1px;background:#e6e8eb;"></div>
<div style="left:876px;top:641px;width:145px;height:48px;background:#fff;border-radius:24px;box-shadow:0 1px 2px 0 rgba(60,64,67,.30),0 1px 3px 1px rgba(60,64,67,.15)"></div>
<svg style="left:892px;top:653px;" width="24" height="24" viewBox="0 0 24 24"><path d="M10.2 0h3.6v10.2h-3.6z" fill="#ea4335"/><path d="M13.8 10.2h10.2v3.6h-10.2z" fill="#4285f4"/><path d="M10.2 13.8h3.6v10.2h-3.6z" fill="#34a853"/><path d="M0 10.2h10.2v3.6H0z" fill="#fbbc04"/><rect x="10.2" y="10.2" width="3.6" height="3.6" fill="#c5221f"/></svg>
<div class="t" style="left:932px;top:654.5px;font-size:14.5px;line-height:20px;color:#3c4043;font-weight:500;">Написать</div>
<div style="left:868px;top:704px;width:240px;height:32px;background:#fce8e6;border-radius:0 16px 16px 0"></div>
<svg style="left:894px;top:710px;" width="20" height="20" viewBox="0 0 24 24"><path d="M19 3H4.99c-1.11 0-1.98.89-1.98 2L3 19c0 1.1.88 2 1.99 2H19c1.1 0 2-.9 2-2V5c0-1.11-.9-2-2-2zm0 12h-4c0 1.66-1.35 3-3 3s-3-1.34-3-3H4.99V5H19v10z" fill="#d93025"/></svg>
<div class="t" style="left:932px;top:710.5px;font-size:13.6px;line-height:19px;color:#d93025;font-weight:700;">Входящие</div>
<div class="t" style="right:825px;top:711.0px;font-size:12.5px;line-height:18px;color:#d93025;font-weight:700;text-align:right;">9 142</div>
<svg style="left:894px;top:742px;" width="20" height="20" viewBox="0 0 24 24"><path d="M12 17.27L18.18 21l-1.64-7.03L22 9.24l-7.19-.61L12 2 9.19 8.63 2 9.24l5.46 4.73L5.82 21z" fill="#5f6368"/></svg>
<div class="t" style="left:932px;top:742.0px;font-size:14.5px;line-height:20px;color:#202124;font-weight:400;">Помеченные</div>
<svg style="left:894px;top:774px;" width="20" height="20" viewBox="0 0 24 24"><path d="M12 2C6.5 2 2 6.5 2 12s4.5 10 10 10 10-4.5 10-10S17.5 2 12 2zm4.2 14.2L11 13V7h1.5v5.2l4.5 2.7-.8 1.3z" fill="#5f6368"/></svg>
<div class="t" style="left:932px;top:774.0px;font-size:14.5px;line-height:20px;color:#202124;font-weight:400;">Отложенные</div>
<svg style="left:894px;top:806px;" width="20" height="20" viewBox="0 0 24 24"><path d="M2.01 21L23 12 2.01 3 2 10l15 2-15 2z" fill="#5f6368"/></svg>
<div class="t" style="left:932px;top:806.0px;font-size:14.5px;line-height:20px;color:#202124;font-weight:400;">Отправленные</div>
<svg style="left:894px;top:838px;" width="20" height="20" viewBox="0 0 24 24"><path d="M6 2c-1.1 0-1.99.9-1.99 2L4 20c0 1.1.89 2 1.99 2H18c1.1 0 2-.9 2-2V8l-6-6H6zm7 7V3.5L18.5 9H13z" fill="#5f6368"/></svg>
<div class="t" style="left:932px;top:838.0px;font-size:14.5px;line-height:20px;color:#202124;font-weight:400;">Черновики</div>
<svg style="left:894px;top:871px;" width="20" height="20" viewBox="0 0 24 24"><path d="M16.59 8.59L12 13.17 7.41 8.59 6 10l6 6 6-6z" fill="#5f6368"/></svg>
<div class="t" style="left:932px;top:871.0px;font-size:14.5px;line-height:20px;color:#202124;font-weight:400;">Ещё</div>
<div style="left:869px;top:897px;width:236px;height:1px;background:#e6e8eb;"></div>
<div class="t" style="left:894px;top:910.5px;font-size:15px;line-height:21px;color:#202124;font-weight:500;">Meet</div>
<svg style="left:894px;top:944px;" width="20" height="20" viewBox="0 0 24 24"><path d="M17 10.5V7c0-.55-.45-1-1-1H4c-.55 0-1 .45-1 1v10c0 .55.45 1 1 1h12c.55 0 1-.45 1-1v-3.5l4 4v-11l-4 4z" fill="#5f6368"/></svg>
<div class="t" style="left:932px;top:944.0px;font-size:14.5px;line-height:20px;color:#202124;font-weight:400;">Новая встреча</div>
<svg style="left:894px;top:976px;" width="20" height="20" viewBox="0 0 24 24"><path d="M20 5H4c-1.1 0-1.99.9-1.99 2L2 17c0 1.1.9 2 2 2h16c1.1 0 2-.9 2-2V7c0-1.1-.9-2-2-2zm-9 3h2v2h-2V8zm0 3h2v2h-2v-2zM8 8h2v2H8V8zm0 3h2v2H8v-2zm-1 2H5v-2h2v2zm0-3H5V8h2v2zm9 7H8v-2h8v2zm0-4h-2v-2h2v2zm0-3h-2V8h2v2zm3 3h-2v-2h2v2zm0-3h-2V8h2v2z" fill="#5f6368"/></svg>
<div class="t" style="left:932px;top:976.0px;font-size:14.5px;line-height:20px;color:#202124;font-weight:400;">Перейти на встречу</div>
<div style="left:869px;top:1009px;width:236px;height:1px;background:#e6e8eb;"></div>
<div class="t" style="left:894px;top:1023.0px;font-size:14.5px;line-height:20px;color:#202124;font-weight:500;">Hangouts</div>
<div style="left:1104px;top:780px;width:1px;height:260px;background:#eeeeee;"></div>
<svg style="left:1138px;top:637px;" width="24" height="24" viewBox="0 0 24 24"><path d="M19 5v14H5V5h14m0-2H5c-1.1 0-2 .9-2 2v14c0 1.1.9 2 2 2h14c1.1 0 2-.9 2-2V5c0-1.1-.9-2-2-2z" fill="#5f6368"/></svg>
<svg style="left:1162px;top:641px;" width="16" height="16" viewBox="0 0 24 24"><path d="M7 10l5 5 5-5z" fill="#5f6368"/></svg>
<svg style="left:1198px;top:637px;" width="24" height="24" viewBox="0 0 24 24"><path d="M17.65 6.35C16.2 4.9 14.21 4 12 4c-4.42 0-7.99 3.58-7.99 8s3.57 8 7.99 8c3.73 0 6.84-2.550 7.73-6h-2.08c-.82 2.33-3.04 4-5.65 4-3.310 0-6-2.69-6-6s2.69-6 6-6c1.66 0 3.14.69 4.22 1.78L13 11h7V4l-2.35 2.35z" fill="#5f6368"/></svg>
<svg style="left:1238px;top:637px;" width="24" height="24" viewBox="0 0 24 24"><path d="M12 8c1.1 0 2-.9 2-2s-.9-2-2-2-2 .9-2 2 .9 2 2 2zm0 2c-1.1 0-2 .9-2 2s.9 2 2 2 2-.9 2-2-.9-2-2-2zm0 6c-1.1 0-2 .9-2 2s.9 2 2 2 2-.9 2-2-.9-2-2-2z" fill="#5f6368"/></svg>
<div class="t" style="right:324px;top:640.0px;font-size:12.7px;line-height:18px;color:#5f6368;font-weight:400;text-align:right;">1–50 из 9 146</div>
<svg style="left:1614px;top:637px;" width="24" height="24" viewBox="0 0 24 24"><path d="M15.41 7.41L14 6l-6 6 6 6 1.41-1.41L10.83 12z" fill="#9aa0a6"/></svg>
<svg style="left:1654px;top:637px;" width="24" height="24" viewBox="0 0 24 24"><path d="M10 6L8.59 7.410 13.17 12l-4.58 4.59L10 18l6-6z" fill="#5f6368"/></svg>
<div class="t" style="left:1695px;top:638.5px;font-size:15px;line-height:21px;color:#5f6368;font-weight:400;">Ру</div>
<svg style="left:1714px;top:639px;" width="18" height="18" viewBox="0 0 24 24"><path d="M7 10l5 5 5-5z" fill="#5f6368"/></svg>
<div style="left:1124px;top:672px;width:624px;height:1px;background:#e6e8eb;"></div>
<div style="left:1764px;top:626px;width:1px;height:414px;background:#e6e8eb;"></div>
<svg style="left:1783px;top:643px;" width="20" height="20" viewBox="0 0 20 20"><rect x="0" y="0" width="20" height="20" rx="2" fill="#4285f4"/><rect x="15" y="4" width="5" height="12" fill="#fbbc04"/><rect x="0" y="16" width="15" height="4" fill="#34a853"/><path d="M15 16 H20 L15 20Z" fill="#ea4335"/><rect x="4" y="4" width="11" height="12" fill="#fff"/><text x="9.5" y="13.5" font-size="7.5" fill="#4285f4" text-anchor="middle" font-family="Liberation Sans">31</text></svg>
<svg style="left:1783px;top:699px;" width="20" height="20" viewBox="0 0 20 20"><rect x="0" y="0" width="20" height="20" rx="2" fill="#fbbc04"/><circle cx="10" cy="8" r="4" fill="#fff"/><rect x="8" y="12" width="4" height="3" fill="#fff"/></svg>
<svg style="left:1783px;top:755px;" width="20" height="20" viewBox="0 0 20 20"><circle cx="10" cy="10" r="10" fill="#4285f4"/><path d="M6 11 L9 14 L15 6" stroke="#fff" stroke-width="2" fill="none"/><circle cx="6" cy="11" r="1.8" fill="#fbbc04"/></svg>
<svg style="left:1783px;top:811px;" width="20" height="20" viewBox="0 0 20 20"><circle cx="10" cy="10" r="10" fill="#1a73e8"/><circle cx="10" cy="8" r="3" fill="#fff"/><path d="M4.5 15 A6 4.5 0 0 1 15.5 15Z" fill="#fff"/></svg>
<div style="left:1783px;top:865px;width:20px;height:1px;background:#dadce0;"></div>
<svg style="left:1783px;top:899px;" width="20" height="20" viewBox="0 0 24 24"><path d="M19 13h-6v6h-2v-6H5v-2h6V5h2v6h6v2z" fill="#5f6368"/></svg>
<svg style="left:1140px;top:690px;" width="20" height="20" viewBox="0 0 24 24"><path d="M19 3H4.99c-1.11 0-1.98.89-1.98 2L3 19c0 1.1.88 2 1.99 2H19c1.1 0 2-.9 2-2V5c0-1.11-.9-2-2-2zm0 12h-4c0 1.66-1.35 3-3 3s-3-1.34-3-3H4.99V5H19v10z" fill="#d93025"/></svg>
<div class="t" style="left:1176px;top:689.5px;font-size:14.65px;line-height:21px;color:#d93025;font-weight:500;">Несортированные</div>
<svg style="left:1342px;top:690px;" width="20" height="20" viewBox="0 0 24 24"><path d="M16 11c1.66 0 2.99-1.34 2.99-3S17.66 5 16 5c-1.66 0-3 1.34-3 3s1.34 3 3 3zm-8 0c1.66 0 2.99-1.34 2.99-3S9.66 5 8 5C6.34 5 5 6.34 5 8s1.34 3 3 3zm0 2c-2.33 0-7 1.17-7 3.5V19h14v-2.5c0-2.33-4.67-3.5-7-3.5zm8 0c-.29 0-.62.02-.97.05 1.16.84 1.97 1.97 1.97 3.45V19h6v-2.5c0-2.33-4.67-3.5-7-3.5z" fill="#5f6368"/></svg>
<div class="t" style="left:1378px;top:689.5px;font-size:14.9px;line-height:21px;color:#5f6368;font-weight:500;">Соцсети</div>
<svg style="left:1544px;top:690px;" width="20" height="20" viewBox="0 0 24 24"><path d="M21.41 11.58l-9-9C12.05 2.22 11.55 2 11 2H4c-1.1 0-2 .9-2 2v7c0 .55.22 1.05.59 1.42l9 9c.36.36.86.58 1.41.58.55 0 1.05-.22 1.41-.59l7-7c.37-.36.59-.86.59-1.41 0-.55-.23-1.06-.59-1.42zM5.5 7C4.67 7 4 6.33 4 5.5S4.67 4 5.5 4 7 4.67 7 5.5 6.33 7 5.5 7z" fill="#5f6368"/></svg>
<div class="t" style="left:1580px;top:689.5px;font-size:14.76px;line-height:21px;color:#5f6368;font-weight:500;">Промоакции</div>
<div style="left:1133px;top:726px;width:183px;height:3px;background:#d93025;"></div>
<div style="left:1124px;top:728px;width:624px;height:40px;background:#f2f6f6;"></div>
<div style="left:1124px;top:728px;width:624px;height:1px;background:#e3e8ea;"></div>
<div style="left:1124px;top:768px;width:624px;height:1px;background:#e8eaed;"></div>
<svg style="left:1139px;top:737px;" width="22" height="22" viewBox="0 0 24 24"><path d="M19 5v14H5V5h14m0-2H5c-1.1 0-2 .9-2 2v14c0 1.1.9 2 2 2h14c1.1 0 2-.9 2-2V5c0-1.1-.9-2-2-2z" fill="#c6c6c6"/></svg>
<svg style="left:1169px;top:738px;" width="20" height="20" viewBox="0 0 24 24"><path d="M22 9.24l-7.19-.62L12 2 9.19 8.63 2 9.24l5.46 4.73L5.82 21 12 17.27 18.18 21l-1.63-7.03L22 9.24zM12 15.4l-3.76 2.27 1-4.28-3.32-2.88 4.38-.38L12 6.1l1.71 4.04 4.38.38-3.32 2.88 1 4.28L12 15.4z" fill="#c6c6c6"/></svg>
<div class="t" style="left:1200px;top:738.5px;font-size:13.8px;line-height:19px;color:#202124;font-weight:400;">я, Mail <span style="font-size:12px;color:#5f6368">2</span></div>
<div class="t" style="left:1400px;top:738.0px;font-size:13.96px;line-height:20px;color:#202124;font-weight:400;">SO was approved for KArina <span style="color:#5f6368">- Адре...</span></div>
<div class="t" style="right:188px;top:739.0px;font-size:12.7px;line-height:18px;color:#5f6368;font-weight:400;text-align:right;">13:22</div>
<div style="left:1753px;top:673px;width:11px;height:108px;background:#c8c8c8"></div>
<div style="left:1105px;top:779px;width:662px;height:266px;background:#fff;border-top-right-radius:10px;box-shadow:2px 0 1px rgba(0,0,0,.75)"></div>
<div style="left:1124px;top:778px;width:624px;height:1px;background:#e8eaed;"></div>
<div style="left:1092px;top:714px;width:648px;height:77px;border:4px solid #f25449;box-shadow:2px 3px 3px rgba(0,0,0,.55),inset 2px 2px 2px rgba(0,0,0,.7)"></div>
<div style="left:1821px;top:1000px;width:99px;height:1px;background:#e6e6e6;"></div>
<div style="left:1821px;top:1008px;width:99px;height:28px;overflow:hidden"><div class="t" style="position:absolute;left:-4px;top:5px;font-size:12px;line-height:17px;color:#222">alance:&nbsp;<b style="font-size:12.6px">$59.88</b></div></div>
<div style="left:1918px;top:940px;width:1px;height:61px;background:#e6e6e6;"></div>
<div style="left:1820px;top:449px;width:1px;height:591px;background:#7d8a89;"></div>
<svg style="left:862px;top:768px;" width="6" height="11" viewBox="0 0 6 11"><path d="M6 0 L0 5.5 L6 11Z" fill="#5a5a5a"/></svg>
</body></html>
